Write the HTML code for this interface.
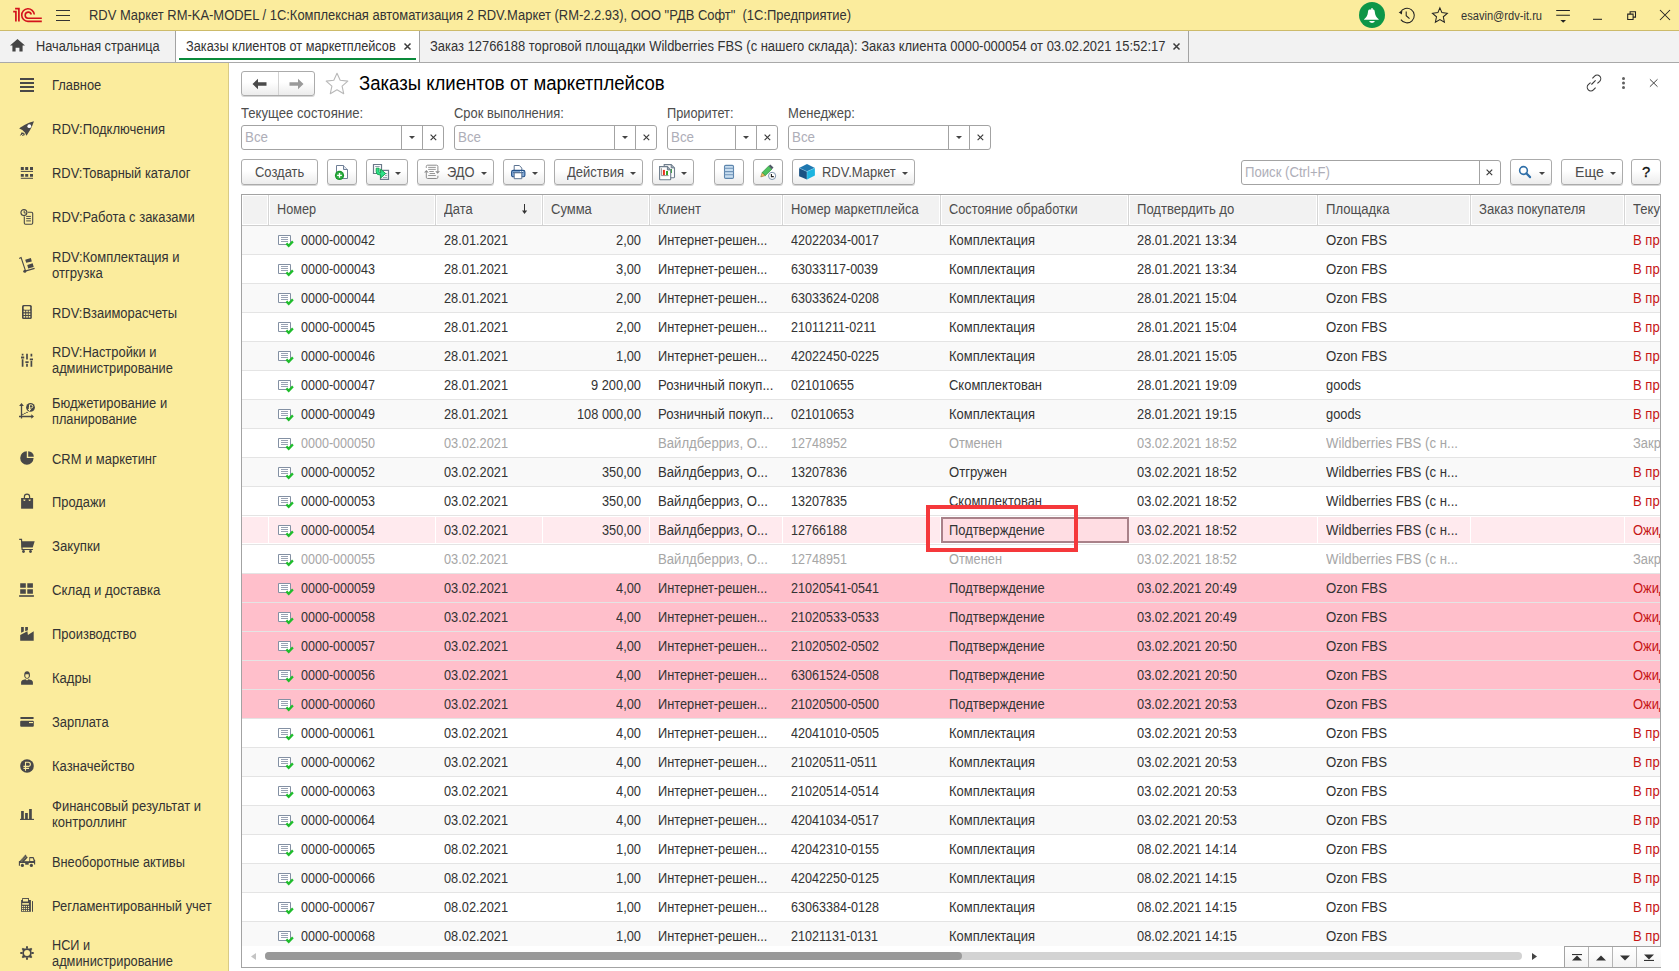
<!DOCTYPE html>
<html><head><meta charset="utf-8"><style>
*{box-sizing:border-box;margin:0;padding:0}
html,body{width:1679px;height:971px;overflow:hidden;background:#fff;font-family:"Liberation Sans",sans-serif;font-size:14px;color:#333;line-height:15px}
div,span,svg{position:absolute}
.tx{white-space:pre;line-height:15px}
.btn{height:26px;border:1px solid #ababab;border-radius:3px;background:linear-gradient(#fff 0%,#fff 45%,#ececec 100%);box-shadow:0 1px 0 rgba(0,0,0,0.16)}
.dd{width:0;height:0;border-left:3px solid transparent;border-right:3px solid transparent;border-top:3px solid #444}
.inp{height:25px;border:1px solid #a3a3a3;border-radius:3px;background:#fff}
.sep{width:1px;background:#a3a3a3}
.ln{height:1px}
</style></head><body>
<div style="left:0px;top:0px;width:1679px;height:30px;background:#fbec9d;"></div>
<div style="left:0px;top:30px;width:1679px;height:1px;background:#cdbb6a;"></div>
<svg style="left:10px;top:4px" width="36" height="22" viewBox="0 0 36 22"><path d="M3.2 7.7H5.9V17.6M5.1 4.6H8.9V17.6" fill="none" stroke="#d3121c" stroke-width="1.7"/><path d="M24.3 10.5A6.3 6.3 0 1 0 17.9 17.4H31.8" fill="none" stroke="#d3121c" stroke-width="1.6"/><path d="M21.3 10.5A3.1 3.1 0 1 0 17.9 14.3H31.8" fill="none" stroke="#d3121c" stroke-width="1.6"/></svg>
<svg style="left:56px;top:9px" width="14" height="13" viewBox="0 0 14 13"><path d="M0 1.5h14M0 6.5h14M0 11.5h14" stroke="#333" stroke-width="1.2"/></svg>
<span class="tx" style="top:8px;font-size:14px;transform:scaleX(0.9245);left:89px;transform-origin:0 0;color:#333;">RDV Маркет RM-KA-MODEL / 1С:Комплексная автоматизация 2 RDV.Маркет (RM-2.2.93), ООО "РДВ Софт"  (1С:Предприятие)</span>
<svg style="left:1340px;top:0px" width="120" height="31" viewBox="1340 0 120 31"><circle cx="1372" cy="15" r="13" fill="#0d9648"/><path d="M1370.6 9.6h2.8c.9 0 1.3 1 1.5 3 .3 3 1.4 5 3.8 6.6v.6h-14.6v-.6c2.4-1.6 3.5-3.6 3.8-6.6.2-2 .6-3 1.5-3z" fill="#fff"/><rect x="1371.2" y="8" width="1.6" height="2.2" rx=".8" fill="#fff"/><path d="M1369.2 21.1h5.6a2.8 1.8 0 0 1-5.6 0z" fill="#fff"/><path d="M1400.4 12.4A7.3 7.3 0 1 1 1400.9 19.6" fill="none" stroke="#222" stroke-width="1.05"/><path d="M1398.6 12.3l3.7-1.3-.5 3.6z" fill="#222"/><path d="M1406.2 11.6v4.1l3.3 3" fill="none" stroke="#222" stroke-width="1.05"/><path d="M1439.9 7.9l2 4.7 5.4.7-4 3.5 1.1 5.4-4.5-2.7-4.5 2.7 1.1-5.4-4-3.5 5.4-.7z" fill="none" stroke="#222" stroke-width="1.05" stroke-linejoin="miter"/></svg>
<span class="tx" style="top:9px;font-size:12px;transform:scaleX(0.9253);left:1461px;transform-origin:0 0;color:#333;">esavin@rdv-it.ru</span>
<svg style="left:1540px;top:0px" width="139" height="31" viewBox="1540 0 139 31"><path d="M1556.2 10.4h13.7M1556.2 15.3h13.7" stroke="#222" stroke-width="1.05"/><path d="M1560.4 20h5.6l-2.8 2.7z" fill="#222"/><path d="M1593 19.3h9" stroke="#222" stroke-width="1.05"/><path d="M1627.7 14.1h5.4v5.4h-5.4zM1630.1 14.1v-2.4h5.4v5.4h-2.4" fill="none" stroke="#222" stroke-width="1.05"/><path d="M1660 10l10 10M1670 10l-10 10" stroke="#222" stroke-width="1.05"/></svg>
<div style="left:0px;top:31px;width:1679px;height:31px;background:#f2f2f2;"></div>
<div style="left:0px;top:62px;width:1679px;height:1px;background:#a9a9a9;"></div>
<div style="left:175px;top:31px;width:1px;height:31px;background:#a3a3a3;"></div>
<div style="left:176px;top:31px;width:243px;height:31px;background:#fff;"></div>
<div style="left:419px;top:31px;width:1px;height:31px;background:#a3a3a3;"></div>
<div style="left:1188px;top:31px;width:1px;height:31px;background:#a3a3a3;"></div>
<div style="left:179px;top:58px;width:237px;height:2px;background:#0a8a3a;"></div>
<svg style="left:10px;top:39px" width="15" height="13" viewBox="0 0 15 13"><path d="M7.5 0L15 6.4h-2.4V12.5H9.4V8.8H5.6v3.7H2.4V6.4H0z" fill="#444"/></svg>
<span class="tx" style="top:39px;font-size:14px;transform:scaleX(0.9133);left:36px;transform-origin:0 0;">Начальная страница</span>
<span class="tx" style="top:39px;font-size:14px;transform:scaleX(0.9096);left:186px;transform-origin:0 0;">Заказы клиентов от маркетплейсов</span>
<svg style="left:403px;top:42px" width="9" height="9" viewBox="0 0 9 9"><path d="M1.5 1.5l6 6M7.5 1.5l-6 6" stroke="#3c3c3c" stroke-width="1.5"/></svg>
<span class="tx" style="top:39px;font-size:14px;transform:scaleX(0.9249);left:430px;transform-origin:0 0;">Заказ 12766188 торговой площадки Wildberries FBS (с нашего склада): Заказ клиента 0000-000054 от 03.02.2021 15:52:17</span>
<svg style="left:1172px;top:42px" width="9" height="9" viewBox="0 0 9 9"><path d="M1.5 1.5l6 6M7.5 1.5l-6 6" stroke="#3c3c3c" stroke-width="1.5"/></svg>
<div style="left:0px;top:63px;width:228px;height:908px;background:#fbec9d;"></div>
<div style="left:228px;top:63px;width:1px;height:908px;background:#d9cb85;"></div>
<span class="tx" style="top:78px;font-size:14px;transform:scaleX(0.9212);left:52px;transform-origin:0 0;color:#333;">Главное</span>
<svg style="left:14px;top:70px" width="26" height="26" viewBox="0 0 26 26"><path d="M6 9h14M6 13h14M6 17h14M6 21h14" stroke="#484848" stroke-width="2"/></svg>
<span class="tx" style="top:122px;font-size:14px;transform:scaleX(0.9308);left:52px;transform-origin:0 0;color:#333;">RDV:Подключения</span>
<svg style="left:14px;top:115px" width="26" height="26" viewBox="0 0 26 26"><path d="M19.9 6.2C16 7 9 10.5 5.2 13.4l3.1 1.6 2.6 2.6 1.5 3.1C15.4 16.8 19 10 19.9 6.2z" fill="#484848"/><circle cx="15.3" cy="11.2" r="1.9" fill="#fff"/><path d="M6.4 20.6l1.2-3.3 1.9 1.1zM8.8 20.6l1.9-1.4-0.4 1.3z" fill="#484848"/><path d="M6.5 20.4l2.2-2.6 1.8 1.3-2.3 1.5" fill="none" stroke="#484848" stroke-width="1"/></svg>
<span class="tx" style="top:166px;font-size:14px;transform:scaleX(0.9243);left:52px;transform-origin:0 0;color:#333;">RDV:Товарный каталог</span>
<svg style="left:14px;top:160px" width="26" height="26" viewBox="0 0 26 26"><path d="M6.8 7h3v3h-3zM11.2 7h3v3h-3zM16 7h3v3h-3zM6.8 14h3v2.8h-3zM11.2 14h3v2.8h-3zM16 14h3v2.8h-3z" fill="#484848"/><path d="M6.8 11.4h12.2M6.8 18.3h12.2" stroke="#484848" stroke-width="1"/></svg>
<span class="tx" style="top:210px;font-size:14px;transform:scaleX(0.9283);left:52px;transform-origin:0 0;color:#333;">RDV:Работа с заказами</span>
<svg style="left:14px;top:204px" width="26" height="26" viewBox="0 0 26 26"><rect x="10.3" y="8.3" width="8.4" height="12" rx="1.2" fill="none" stroke="#484848" stroke-width="1.1"/><circle cx="9.9" cy="8.6" r="3.9" fill="#fbec9d"/><circle cx="9.9" cy="8.6" r="3" fill="none" stroke="#484848" stroke-width="1.1"/><path d="M10.2 6.8v2.2h1.6" fill="none" stroke="#484848" stroke-width="1"/><path d="M12.2 12.4h4.7M12.2 14.6h4.7M12.2 16.9h4.7" stroke="#484848" stroke-width="1"/></svg>
<span class="tx" style="top:250px;font-size:14px;transform:scaleX(0.9275);left:52px;transform-origin:0 0;color:#333;">RDV:Комплектация и</span>
<span class="tx" style="top:266px;font-size:14px;transform:scaleX(0.9371);left:52px;transform-origin:0 0;color:#333;">отгрузка</span>
<svg style="left:14px;top:252px" width="26" height="26" viewBox="0 0 26 26"><path d="M5.2 6.6l1.9-1 4.5 13.6" fill="none" stroke="#484848" stroke-width="1.1"/><circle cx="10.8" cy="19.2" r="1.5" fill="#484848"/><path d="M12 18.8l8.6-2.5" stroke="#484848" stroke-width="1.2"/><path d="M11.2 7.8l5.7-1.9 0.9 3.5-5.6 1.4zM13.3 12.9l5.4-1.7 1 3.8-5.5 1.4z" fill="#484848"/></svg>
<span class="tx" style="top:306px;font-size:14px;transform:scaleX(0.9241);left:52px;transform-origin:0 0;color:#333;">RDV:Взаиморасчеты</span>
<svg style="left:14px;top:299px" width="26" height="26" viewBox="0 0 26 26"><rect x="8" y="6" width="9.8" height="13.9" rx="1.5" fill="#484848"/><rect x="9.7" y="7.3" width="6.5" height="3.4" rx="0.8" fill="#fbec9d"/><rect x="9.6" y="11.6" width="1.6" height="1.6" fill="#fbec9d"/><rect x="9.6" y="14.4" width="1.6" height="1.6" fill="#fbec9d"/><rect x="9.6" y="17.0" width="1.6" height="1.6" fill="#fbec9d"/><rect x="12.2" y="11.6" width="1.6" height="1.6" fill="#fbec9d"/><rect x="12.2" y="14.4" width="1.6" height="1.6" fill="#fbec9d"/><rect x="12.2" y="17.0" width="1.6" height="1.6" fill="#fbec9d"/><rect x="14.7" y="11.6" width="1.6" height="1.6" fill="#fbec9d"/><rect x="14.7" y="14.4" width="1.6" height="1.6" fill="#fbec9d"/><rect x="14.7" y="17.0" width="1.6" height="1.6" fill="#fbec9d"/></svg>
<span class="tx" style="top:345px;font-size:14px;transform:scaleX(0.9226);left:52px;transform-origin:0 0;color:#333;">RDV:Настройки и</span>
<span class="tx" style="top:361px;font-size:14px;transform:scaleX(0.9159);left:52px;transform-origin:0 0;color:#333;">администрирование</span>
<svg style="left:14px;top:347px" width="26" height="26" viewBox="0 0 26 26"><path d="M8.6 6.8v1.6M8.6 12.2v7.6M13 6.8v5.6M13 16.8v3M17.4 6.8v2.8M17.4 13.8v6" stroke="#484848" stroke-width="1.7"/><path d="M7 9.6h3.2v1.8H7zM11.4 14.2h3.2v1.8h-3.2zM15.8 11.4h3.2v1.8h-3.2z" fill="#484848"/></svg>
<span class="tx" style="top:396px;font-size:14px;transform:scaleX(0.9274);left:52px;transform-origin:0 0;color:#333;">Бюджетирование и</span>
<span class="tx" style="top:412px;font-size:14px;transform:scaleX(0.9118);left:52px;transform-origin:0 0;color:#333;">планирование</span>
<svg style="left:14px;top:398px" width="26" height="26" viewBox="0 0 26 26"><path d="M7.5 6.8V20.6M5 18.5h13" stroke="#484848" stroke-width="1.3"/><path d="M7.5 5l2.4 2.9H5.1zM20 18.5l-2.7 2.3v-4.6z" fill="#484848"/><path d="M8.2 16.4h1.2l1-1h1l1-1h1.4" fill="none" stroke="#484848" stroke-width="1"/><circle cx="16.5" cy="9.4" r="4.4" fill="#484848"/><path d="M15.5 13V6.8h1.7a1.6 1.6 0 0 1 0 3.2h-2.6M14 11.6h3" fill="none" stroke="#fbec9d" stroke-width="1"/></svg>
<span class="tx" style="top:452px;font-size:14px;transform:scaleX(0.9238);left:52px;transform-origin:0 0;color:#333;">CRM и маркетинг</span>
<svg style="left:14px;top:445px" width="26" height="26" viewBox="0 0 26 26"><path d="M12.8 6.3A6.7 6.7 0 1 0 19.6 13.1H12.8z" fill="#484848"/><path d="M14.2 6.2A5.6 5.6 0 0 1 19.8 11.8H14.2z" fill="#484848"/></svg>
<span class="tx" style="top:495px;font-size:14px;transform:scaleX(0.9188);left:52px;transform-origin:0 0;color:#333;">Продажи</span>
<svg style="left:14px;top:488px" width="26" height="26" viewBox="0 0 26 26"><path d="M7.1 10h12v10.7h-12z" fill="#484848"/><circle cx="10.4" cy="12" r="1" fill="#fbec9d"/><circle cx="15.6" cy="12" r="1" fill="#fbec9d"/><path d="M10.4 11.5V8.8a2.6 2.6 0 0 1 5.2 0v2.7" fill="none" stroke="#484848" stroke-width="1.2"/></svg>
<span class="tx" style="top:539px;font-size:14px;transform:scaleX(0.9431);left:52px;transform-origin:0 0;color:#333;">Закупки</span>
<svg style="left:14px;top:533px" width="26" height="26" viewBox="0 0 26 26"><path d="M5.2 6.4h2.3l0.6 10.1h10.8" fill="none" stroke="#484848" stroke-width="1.2"/><path d="M7.6 8.3h13.1l-2 6.3H7.4z" fill="#484848"/><circle cx="9.5" cy="18.5" r="1.4" fill="#484848"/><circle cx="16.5" cy="18.5" r="1.4" fill="#484848"/></svg>
<span class="tx" style="top:583px;font-size:14px;transform:scaleX(0.9436);left:52px;transform-origin:0 0;color:#333;">Склад и доставка</span>
<svg style="left:14px;top:577px" width="26" height="26" viewBox="0 0 26 26"><path d="M6.2 6.2h5.6v4.5H6.2zM13.3 6.2h5.6v4.5h-5.6zM6.2 12.2h5.6v4.5H6.2zM13.3 12.2h5.6v4.5h-5.6z" fill="#484848"/><path d="M5.1 18.2h14.8v1.6H5.1z" fill="#484848"/></svg>
<span class="tx" style="top:627px;font-size:14px;transform:scaleX(0.9249);left:52px;transform-origin:0 0;color:#333;">Производство</span>
<svg style="left:14px;top:621px" width="26" height="26" viewBox="0 0 26 26"><path d="M7.1 6h2.7v4.5l-2.7 1.2zM11.2 6h2.7v3.2l-2.7 1.1z" fill="#484848"/><path d="M6.2 14l7.2-3.7 0.5 3.7 5.8-3.7v9.5H6.2z" fill="#484848"/></svg>
<span class="tx" style="top:671px;font-size:14px;transform:scaleX(0.9295);left:52px;transform-origin:0 0;color:#333;">Кадры</span>
<svg style="left:14px;top:665px" width="26" height="26" viewBox="0 0 26 26"><path d="M10.2 10.5c0-3 1-4.3 2.9-4.3s2.9 1.3 2.9 4.3c0 2-1.2 3.2-2.9 3.2s-2.9-1.2-2.9-3.2z" fill="#484848"/><path d="M11.3 9.6c0.9-0.3 2-0.6 3.5-0.1v1.6c0 1.3-0.7 2-1.7 2s-1.8-0.7-1.8-2z" fill="#fbec9d"/><path d="M7.1 17.2c0-1.6 1.5-2.6 4.4-3l1.5 1.2 1.5-1.2c2.9 0.4 4.4 1.4 4.4 3v2.6H7.1z" fill="#484848"/></svg>
<span class="tx" style="top:715px;font-size:14px;transform:scaleX(0.9229);left:52px;transform-origin:0 0;color:#333;">Зарплата</span>
<svg style="left:14px;top:709px" width="26" height="26" viewBox="0 0 26 26"><rect x="6.2" y="8" width="13.6" height="1.9" rx="0.9" fill="#484848"/><rect x="6.2" y="11.8" width="13.6" height="5.9" rx="1" fill="#484848"/><rect x="15" y="13" width="4" height="1.1" fill="#fbec9d"/></svg>
<span class="tx" style="top:759px;font-size:14px;transform:scaleX(0.9283);left:52px;transform-origin:0 0;color:#333;">Казначейство</span>
<svg style="left:14px;top:753px" width="26" height="26" viewBox="0 0 26 26"><circle cx="13" cy="13" r="6.8" fill="#484848"/><path d="M11.5 17.8V9.2h2.8a2.1 2.1 0 0 1 0 4.2h-4.9M9.4 15.4h5.6" fill="none" stroke="#fbec9d" stroke-width="1.1"/></svg>
<span class="tx" style="top:799px;font-size:14px;transform:scaleX(0.9293);left:52px;transform-origin:0 0;color:#333;">Финансовый результат и</span>
<span class="tx" style="top:815px;font-size:14px;transform:scaleX(0.9303);left:52px;transform-origin:0 0;color:#333;">контроллинг</span>
<svg style="left:14px;top:801px" width="26" height="26" viewBox="0 0 26 26"><path d="M7.1 10h2.7v8.5H7.1zM11.1 12h2.7v6.5h-2.7zM15.1 8h2.7v10.5h-2.7z" fill="#484848"/><path d="M6 18.4h14" stroke="#484848" stroke-width="1.1"/></svg>
<span class="tx" style="top:855px;font-size:14px;transform:scaleX(0.9138);left:52px;transform-origin:0 0;color:#333;">Внеоборотные активы</span>
<svg style="left:14px;top:848px" width="26" height="26" viewBox="0 0 26 26"><path d="M5.1 13.2h15.8v1.8H5.1z" fill="#484848"/><path d="M5.4 13.2v4.5M20.6 12v4.6" stroke="#484848" stroke-width="1.1"/><path d="M15.3 9h4.2l1.4 3.2v2.3h-5.6z" fill="#484848"/><path d="M16.1 10.2h2.8l0.8 2.9h-3.6z" fill="#fbec9d"/><path d="M5.1 13.7l6.4-7.3 2.2 3-4.1 4.5z" fill="#484848"/><path d="M6.6 13l4.6-5.2M7.8 13.5l4.8-5.4" stroke="#fbec9d" stroke-width="0.6" stroke-dasharray="0.8 0.8"/><path d="M11.2 15h3.5v1.7h-3.5z" fill="#484848"/><circle cx="8.4" cy="17.4" r="1.6" fill="#484848"/><circle cx="17.4" cy="17.4" r="1.6" fill="#484848"/></svg>
<span class="tx" style="top:899px;font-size:14px;transform:scaleX(0.9248);left:52px;transform-origin:0 0;color:#333;">Регламентированный учет</span>
<svg style="left:14px;top:892px" width="26" height="26" viewBox="0 0 26 26"><path d="M7.1 8h9.8v11.8H7.1z" fill="#484848"/><path d="M8.2 6h6.7v4.2H8.2z" fill="#484848"/><path d="M9 6.9h5v2.6H9z" fill="#fbec9d"/><path d="M8.2 11.1h6.7v1.6H8.2z" fill="#fbec9d"/><rect x="8.0" y="13.9" width="1.2" height="1.2" fill="#fbec9d"/><rect x="8.0" y="15.9" width="1.2" height="1.2" fill="#fbec9d"/><rect x="8.0" y="17.9" width="1.2" height="1.2" fill="#fbec9d"/><rect x="9.8" y="13.9" width="1.2" height="1.2" fill="#fbec9d"/><rect x="9.8" y="15.9" width="1.2" height="1.2" fill="#fbec9d"/><rect x="9.8" y="17.9" width="1.2" height="1.2" fill="#fbec9d"/><rect x="11.8" y="13.9" width="1.2" height="1.2" fill="#fbec9d"/><rect x="11.8" y="15.9" width="1.2" height="1.2" fill="#fbec9d"/><rect x="11.8" y="17.9" width="1.2" height="1.2" fill="#fbec9d"/><rect x="13.9" y="13.9" width="1.2" height="1.2" fill="#fbec9d"/><rect x="13.9" y="15.9" width="1.2" height="1.2" fill="#fbec9d"/><rect x="13.9" y="17.9" width="1.2" height="1.2" fill="#fbec9d"/><path d="M18.5 9.1v10.7" stroke="#484848" stroke-width="1"/></svg>
<span class="tx" style="top:938px;font-size:14px;transform:scaleX(0.9049);left:52px;transform-origin:0 0;color:#333;">НСИ и</span>
<span class="tx" style="top:954px;font-size:14px;transform:scaleX(0.9159);left:52px;transform-origin:0 0;color:#333;">администрирование</span>
<svg style="left:14px;top:940px" width="26" height="26" viewBox="0 0 26 26"><path d="M13 6.3v2.4M13 17.3v2.4M6.3 13h2.4M17.3 13h2.4M8.3 8.3l1.6 1.6M16.1 16.1l1.6 1.6M17.7 8.3l-1.6 1.6M9.9 16.1l-1.6 1.6" stroke="#484848" stroke-width="1.9"/><rect x="8.6" y="8.6" width="8.8" height="8.8" rx="1.5" fill="#484848"/><circle cx="13" cy="13" r="3" fill="#fbec9d"/></svg>
<div class="btn" style="left:241px;top:71px;width:74px;height:25px"></div>
<div style="left:278px;top:72px;width:1px;height:23px;background:#d2d2d2;"></div>
<svg style="left:252px;top:78px" width="15" height="12" viewBox="0 0 15 12"><path d="M0.5 6L6 0.8V4.2H14.5V7.8H6V11.2z" fill="#4a4a4a"/></svg>
<svg style="left:289px;top:78px" width="15" height="12" viewBox="0 0 15 12"><path d="M14.5 6L9 0.8V4.2H0.5V7.8H9V11.2z" fill="#9a9a9a"/></svg>
<svg style="left:325px;top:72px" width="24" height="23" viewBox="0 0 24 23"><path d="M12 1.2l3.2 7.1 7.6.8-5.7 5.1 1.6 7.5L12 17.8l-6.7 3.9 1.6-7.5-5.7-5.1 7.6-.8z" fill="none" stroke="#b8b8b8" stroke-width="1.1" stroke-linejoin="round"/></svg>
<span class="tx" style="top:74px;font-size:20px;transform:scaleX(0.9278);left:359px;transform-origin:0 0;color:#000;top:73px;line-height:20px;">Заказы клиентов от маркетплейсов</span>
<svg style="left:1582px;top:71px" width="24" height="24" viewBox="0 0 24 24"><path d="M10.4 7.4l2.2-2.2a3.6 3.6 0 0 1 5.1 5.1l-2.3 2.1M13.6 16.6l-2.2 2.2a3.6 3.6 0 0 1-5.1-5.1l2.3-2.1M9.4 13.5l4.2-4.2" fill="none" stroke="#3a3a3a" stroke-width="1.1"/></svg>
<svg style="left:1621px;top:77px" width="5" height="12" viewBox="0 0 5 12"><circle cx="2.5" cy="1.6" r="1.5" fill="#606060"/><circle cx="2.5" cy="6" r="1.5" fill="#606060"/><circle cx="2.5" cy="10.4" r="1.5" fill="#606060"/></svg>
<svg style="left:1649px;top:78px" width="10" height="10" viewBox="0 0 10 10"><path d="M0.9 1.3l7.6 7.4M8.5 1.3l-7.6 7.4" stroke="#444" stroke-width="1"/></svg>
<span class="tx" style="top:106px;font-size:14px;transform:scaleX(0.9372);left:241px;transform-origin:0 0;color:#4d4d4d;">Текущее состояние:</span>
<span class="tx" style="top:106px;font-size:14px;transform:scaleX(0.9223);left:454px;transform-origin:0 0;color:#4d4d4d;">Срок выполнения:</span>
<span class="tx" style="top:106px;font-size:14px;transform:scaleX(0.9108);left:667px;transform-origin:0 0;color:#4d4d4d;">Приоритет:</span>
<span class="tx" style="top:106px;font-size:14px;transform:scaleX(0.9310);left:788px;transform-origin:0 0;color:#4d4d4d;">Менеджер:</span>
<div class="inp" style="left:241px;top:125px;width:203px"></div>
<div style="left:401px;top:126px;width:1px;height:23px;background:#a3a3a3;"></div>
<div style="left:422px;top:126px;width:1px;height:23px;background:#a3a3a3;"></div>
<div class="dd" style="left:409px;top:136px"></div>
<svg style="left:430px;top:134px" width="7" height="7" viewBox="0 0 7 7"><path d="M0.6 0.6l5.6 5.6M6.2 0.6l-5.6 5.6" stroke="#3a3a3a" stroke-width="1.15"/></svg>
<span class="tx" style="top:130px;font-size:14px;transform:scaleX(0.9534);left:245px;transform-origin:0 0;color:#aeaeb8;">Все</span>
<div class="inp" style="left:454px;top:125px;width:203px"></div>
<div style="left:614px;top:126px;width:1px;height:23px;background:#a3a3a3;"></div>
<div style="left:635px;top:126px;width:1px;height:23px;background:#a3a3a3;"></div>
<div class="dd" style="left:622px;top:136px"></div>
<svg style="left:643px;top:134px" width="7" height="7" viewBox="0 0 7 7"><path d="M0.6 0.6l5.6 5.6M6.2 0.6l-5.6 5.6" stroke="#3a3a3a" stroke-width="1.15"/></svg>
<span class="tx" style="top:130px;font-size:14px;transform:scaleX(0.9534);left:458px;transform-origin:0 0;color:#aeaeb8;">Все</span>
<div class="inp" style="left:667px;top:125px;width:111px"></div>
<div style="left:735px;top:126px;width:1px;height:23px;background:#a3a3a3;"></div>
<div style="left:756px;top:126px;width:1px;height:23px;background:#a3a3a3;"></div>
<div class="dd" style="left:743px;top:136px"></div>
<svg style="left:764px;top:134px" width="7" height="7" viewBox="0 0 7 7"><path d="M0.6 0.6l5.6 5.6M6.2 0.6l-5.6 5.6" stroke="#3a3a3a" stroke-width="1.15"/></svg>
<span class="tx" style="top:130px;font-size:14px;transform:scaleX(0.9534);left:671px;transform-origin:0 0;color:#aeaeb8;">Все</span>
<div class="inp" style="left:788px;top:125px;width:203px"></div>
<div style="left:948px;top:126px;width:1px;height:23px;background:#a3a3a3;"></div>
<div style="left:969px;top:126px;width:1px;height:23px;background:#a3a3a3;"></div>
<div class="dd" style="left:956px;top:136px"></div>
<svg style="left:977px;top:134px" width="7" height="7" viewBox="0 0 7 7"><path d="M0.6 0.6l5.6 5.6M6.2 0.6l-5.6 5.6" stroke="#3a3a3a" stroke-width="1.15"/></svg>
<span class="tx" style="top:130px;font-size:14px;transform:scaleX(0.9534);left:792px;transform-origin:0 0;color:#aeaeb8;">Все</span>
<div class="btn" style="left:241px;top:159px;width:77px;height:26px"></div>
<span class="tx" style="top:165px;font-size:14px;transform:scaleX(0.9263);left:255px;transform-origin:0 0;color:#4d4d4d;">Создать</span>
<div class="btn" style="left:327px;top:159px;width:30px;height:26px"></div>
<svg style="left:330px;top:160px" width="24" height="24" viewBox="0 0 24 24"><path d="M6.5 5.5h7l4 4v9h-11z" fill="#fff" stroke="#6f7f96" stroke-width="1"/><path d="M13.5 5.5v4h4" fill="#dfe5ee" stroke="#6f7f96" stroke-width="1"/><circle cx="9.5" cy="15.4" r="4.6" fill="#16962a"/><circle cx="9.5" cy="15.4" r="3.4" fill="#2fae42"/><path d="M9.5 13v4.8M7.1 15.4h4.8" stroke="#fff" stroke-width="1.3"/></svg>
<div class="btn" style="left:366px;top:159px;width:42px;height:26px"></div>
<svg style="left:368px;top:160px" width="24" height="24" viewBox="0 0 24 24"><path d="M5.5 4.5h8v9h-8z" fill="#fff" stroke="#6b7889" stroke-width="1.2"/><path d="M7.2 6.5h4.5" stroke="#8894a4" stroke-width="0.9"/><path d="M12.5 10.4h8v9h-8z" fill="#fff" stroke="#6b7889" stroke-width="1.2"/><path d="M17 13.5h2.2M17 15.4h2.2M15 17.4h4.2" stroke="#8894a4" stroke-width="0.9"/><path d="M8.2 8.2h2.9v3.6c0 .6.4 1 1 1h.6V9.1l5 4.4-5 4.5v-3.2h-1.6a3 3 0 0 1-2.9-3z" fill="#2ee08a" stroke="#12a04a" stroke-width="0.9" stroke-linejoin="round"/></svg>
<div class="dd" style="left:395px;top:172px"></div>
<div class="btn" style="left:417px;top:159px;width:77px;height:26px"></div>
<svg style="left:420px;top:160px" width="24" height="24" viewBox="0 0 24 24"><path d="M6.3 7.9V6.5a1.3 1.3 0 0 1 1.3-1.3h9a1.3 1.3 0 0 1 1.3 1.3v5M17.9 15.8v1.4a1.3 1.3 0 0 1-1.3 1.3h-9a1.3 1.3 0 0 1-1.3-1.3V12.4" fill="none" stroke="#8c8c8c" stroke-width="1"/><path d="M6.4 10.1l2.4 2.5H4z M17.6 13.8l2.4-2.5h-4.8z" fill="#8c8c8c"/><path d="M8.2 7.4h7.6M8.2 9.4h7.6M9.3 11.5h4.5M9.6 13.5h5.4M8.2 15.5h7.6" stroke="#8c8c8c" stroke-width="0.9"/></svg>
<span class="tx" style="top:165px;font-size:14px;transform:scaleX(0.9200);left:447px;transform-origin:0 0;color:#4d4d4d;">ЭДО</span>
<div class="dd" style="left:481px;top:172px"></div>
<div class="btn" style="left:503px;top:159px;width:42px;height:26px"></div>
<svg style="left:506px;top:160px" width="24" height="24" viewBox="0 0 24 24"><path d="M8.2 10.4V5.5h5.2l2.4 2.6v2.3" fill="#fff" stroke="#5c7391" stroke-width="1"/><rect x="5.6" y="10.4" width="13.3" height="6.4" rx="1.6" fill="#86acd8" stroke="#24528a" stroke-width="1.1"/><path d="M7.2 12.4h10.2" stroke="#24528a" stroke-width="0.9"/><path d="M8.2 12.8h7.6v5.9H8.2z" fill="#fff" stroke="#5c7391" stroke-width="1"/><circle cx="14.5" cy="11.5" r="0.55" fill="#fff"/><circle cx="16.6" cy="11.5" r="0.55" fill="#fff"/></svg>
<div class="dd" style="left:532px;top:172px"></div>
<div class="btn" style="left:554px;top:159px;width:89px;height:26px"></div>
<span class="tx" style="top:165px;font-size:14px;transform:scaleX(0.9293);left:567px;transform-origin:0 0;color:#4d4d4d;">Действия</span>
<div class="dd" style="left:630px;top:172px"></div>
<div class="btn" style="left:652px;top:159px;width:42px;height:26px"></div>
<svg style="left:655px;top:160px" width="24" height="24" viewBox="0 0 24 24"><path d="M9.2 4.6h7l3.3 3.3v9.2a.6.6 0 0 1-.6.6h-9.7z" fill="#fff" stroke="#6e7d8c" stroke-width="1.1"/><path d="M16.2 4.6v3.3h3.3" fill="#9aa6b3" stroke="#6e7d8c" stroke-width="1"/><path d="M15 9h2v4h-2z" fill="#3aa63a"/><path d="M4.6 6.6h7.8l3.3 3.3v9.3a.6.6 0 0 1-.6.6H5.2a.6.6 0 0 1-.6-.6z" fill="#fff" stroke="#6e7d8c" stroke-width="1.1"/><path d="M12.4 6.6v3.3h3.3" fill="#9aa6b3" stroke="#6e7d8c" stroke-width="1"/><path d="M6.4 8.2v7.4h7.2" fill="none" stroke="#8a8a8a" stroke-width="0.9"/><path d="M7.9 9.9h2v5.2h-2z" fill="#e8321e"/><path d="M11 11h2v4.1h-2z" fill="#37a52b"/></svg>
<div class="dd" style="left:681px;top:172px"></div>
<div class="btn" style="left:714px;top:159px;width:30px;height:26px"></div>
<svg style="left:717px;top:160px" width="24" height="24" viewBox="0 0 24 24"><rect x="7.5" y="5.4" width="9" height="13" rx="1.2" fill="#c8def0" stroke="#5e86ad" stroke-width="1.1"/><path d="M7.5 8.3h9M7.5 11.6h9M7.5 14.8h9" stroke="#6f93b8" stroke-width="1.1"/></svg>
<div class="btn" style="left:753px;top:159px;width:30px;height:26px"></div>
<svg style="left:756px;top:160px" width="24" height="24" viewBox="0 0 24 24"><path d="M4.8 16.9l1.4-4.4 3.2 3z" fill="#f4c060" stroke="#8a6a30" stroke-width="0.6"/><path d="M6.2 12.5l6.5-6.5 3.2 3.2-6.5 6.3z" fill="#4dc25e" stroke="#1f8a30" stroke-width="0.6"/><path d="M12.7 6l1.6-1.6 3.2 3.2-1.6 1.6z" fill="#505a66"/><circle cx="16.1" cy="15.9" r="3.6" fill="#fff" stroke="#7f95ad" stroke-width="1"/><path d="M15.4 14v2.6h2.4" fill="none" stroke="#222" stroke-width="1.1"/></svg>
<div class="btn" style="left:792px;top:159px;width:123px;height:26px"></div>
<svg style="left:795px;top:160px" width="24" height="24" viewBox="0 0 24 24"><path d="M12 4.1L19.9 7.9 12 11.6 4.1 7.9z" fill="#1f78b0"/><path d="M4.1 7.9L12 11.6v7.9l-7.9-3.3z" fill="#1b5283"/><path d="M19.9 7.9L12 11.6v7.9l7.9-4.1z" fill="#1db5e0"/><path d="M4.1 7.9L12 11.6 19.9 7.9M12 11.6v7.9" fill="none" stroke="#8fd3f0" stroke-width="0.6" opacity="0.8"/></svg>
<span class="tx" style="top:165px;font-size:14px;transform:scaleX(0.9259);left:822px;transform-origin:0 0;color:#4d4d4d;">RDV.Маркет</span>
<div class="dd" style="left:902px;top:172px"></div>
<div class="inp" style="left:1241px;top:160px;width:260px;height:25px"></div>
<div style="left:1479px;top:161px;width:1px;height:23px;background:#a3a3a3;"></div>
<svg style="left:1486px;top:169px" width="7" height="7" viewBox="0 0 7 7"><path d="M0.6 0.6l5.6 5.6M6.2 0.6l-5.6 5.6" stroke="#3a3a3a" stroke-width="1.15"/></svg>
<span class="tx" style="top:165px;font-size:14px;transform:scaleX(0.9391);left:1245px;transform-origin:0 0;color:#aeaeb8;">Поиск (Ctrl+F)</span>
<div class="btn" style="left:1510px;top:159px;width:42px;height:26px"></div>
<svg style="left:1513px;top:160px" width="24" height="24" viewBox="0 0 24 24"><circle cx="10.5" cy="10.5" r="3.85" fill="none" stroke="#2f6fa8" stroke-width="1.6"/><path d="M13.3 13.3l3.8 3.8" stroke="#2f6fa8" stroke-width="2.2" stroke-linecap="round"/></svg>
<div class="dd" style="left:1539px;top:172px"></div>
<div class="btn" style="left:1561px;top:159px;width:62px;height:26px"></div>
<span class="tx" style="top:165px;font-size:14px;transform:scaleX(1.0125);left:1575px;transform-origin:0 0;color:#4d4d4d;">Еще</span>
<div class="dd" style="left:1610px;top:172px"></div>
<div class="btn" style="left:1631px;top:159px;width:30px;height:26px"></div>
<span class="tx" style="top:164px;font-size:15px;transform:scaleX(0.9829);left:1642px;transform-origin:0 0;color:#111;-webkit-text-stroke:0.35px #111;">?</span>
<div style="left:241px;top:194px;width:1420px;height:774px;border:1px solid #a3a3a3;background:#fff"></div>
<div style="left:242px;top:195px;width:1418px;height:30px;background:#f2f2f2;"></div>
<div style="left:242px;top:195px;width:1418px;height:1px;background:#fff;"></div>
<div style="left:242px;top:195px;width:1px;height:30px;background:#fff;"></div>
<div style="left:242px;top:224px;width:1418px;height:1px;background:#fff;"></div>
<div style="left:267px;top:195px;width:1px;height:30px;background:#fff;"></div>
<div style="left:268px;top:195px;width:1px;height:30px;background:#d6d6d6;"></div>
<div style="left:269px;top:195px;width:1px;height:30px;background:#fff;"></div>
<div style="left:434px;top:195px;width:1px;height:30px;background:#fff;"></div>
<div style="left:435px;top:195px;width:1px;height:30px;background:#d6d6d6;"></div>
<div style="left:436px;top:195px;width:1px;height:30px;background:#fff;"></div>
<div style="left:541px;top:195px;width:1px;height:30px;background:#fff;"></div>
<div style="left:542px;top:195px;width:1px;height:30px;background:#d6d6d6;"></div>
<div style="left:543px;top:195px;width:1px;height:30px;background:#fff;"></div>
<div style="left:648px;top:195px;width:1px;height:30px;background:#fff;"></div>
<div style="left:649px;top:195px;width:1px;height:30px;background:#d6d6d6;"></div>
<div style="left:650px;top:195px;width:1px;height:30px;background:#fff;"></div>
<div style="left:781px;top:195px;width:1px;height:30px;background:#fff;"></div>
<div style="left:782px;top:195px;width:1px;height:30px;background:#d6d6d6;"></div>
<div style="left:783px;top:195px;width:1px;height:30px;background:#fff;"></div>
<div style="left:939px;top:195px;width:1px;height:30px;background:#fff;"></div>
<div style="left:940px;top:195px;width:1px;height:30px;background:#d6d6d6;"></div>
<div style="left:941px;top:195px;width:1px;height:30px;background:#fff;"></div>
<div style="left:1127px;top:195px;width:1px;height:30px;background:#fff;"></div>
<div style="left:1128px;top:195px;width:1px;height:30px;background:#d6d6d6;"></div>
<div style="left:1129px;top:195px;width:1px;height:30px;background:#fff;"></div>
<div style="left:1316px;top:195px;width:1px;height:30px;background:#fff;"></div>
<div style="left:1317px;top:195px;width:1px;height:30px;background:#d6d6d6;"></div>
<div style="left:1318px;top:195px;width:1px;height:30px;background:#fff;"></div>
<div style="left:1469px;top:195px;width:1px;height:30px;background:#fff;"></div>
<div style="left:1470px;top:195px;width:1px;height:30px;background:#d6d6d6;"></div>
<div style="left:1471px;top:195px;width:1px;height:30px;background:#fff;"></div>
<div style="left:1623px;top:195px;width:1px;height:30px;background:#fff;"></div>
<div style="left:1624px;top:195px;width:1px;height:30px;background:#d6d6d6;"></div>
<div style="left:1625px;top:195px;width:1px;height:30px;background:#fff;"></div>
<div style="left:1659px;top:195px;width:1px;height:30px;background:#fff;"></div>
<div style="left:242px;top:225px;width:1418px;height:1px;background:#cfcfcf;"></div>
<div style="left:242px;top:195px;width:1418px;height:751px;overflow:hidden">
<span class="tx" style="top:7px;font-size:14px;transform:scaleX(0.9050);left:35px;transform-origin:0 0;color:#4d4d4d;">Номер</span>
<span class="tx" style="top:7px;font-size:14px;transform:scaleX(0.9216);left:202px;transform-origin:0 0;color:#4d4d4d;">Дата</span>
<span class="tx" style="top:7px;font-size:14px;transform:scaleX(0.9287);left:309px;transform-origin:0 0;color:#4d4d4d;">Сумма</span>
<span class="tx" style="top:7px;font-size:14px;transform:scaleX(0.9333);left:416px;transform-origin:0 0;color:#4d4d4d;">Клиент</span>
<span class="tx" style="top:7px;font-size:14px;transform:scaleX(0.9232);left:549px;transform-origin:0 0;color:#4d4d4d;">Номер маркетплейса</span>
<span class="tx" style="top:7px;font-size:14px;transform:scaleX(0.9120);left:707px;transform-origin:0 0;color:#4d4d4d;">Состояние обработки</span>
<span class="tx" style="top:7px;font-size:14px;transform:scaleX(0.9335);left:895px;transform-origin:0 0;color:#4d4d4d;">Подтвердить до</span>
<span class="tx" style="top:7px;font-size:14px;transform:scaleX(0.9347);left:1084px;transform-origin:0 0;color:#4d4d4d;">Площадка</span>
<span class="tx" style="top:7px;font-size:14px;transform:scaleX(0.9364);left:1237px;transform-origin:0 0;color:#4d4d4d;">Заказ покупателя</span>
<span class="tx" style="top:7px;font-size:14px;transform:scaleX(0.9345);left:1391px;transform-origin:0 0;color:#4d4d4d;">Текущее состояние</span>
<svg style="left:278px;top:9px" width="9" height="11" viewBox="0 0 9 11"><path d="M4.5 0v8" stroke="#333" stroke-width="1"/><path d="M2 6.6L4.5 10 7.2 6.6z" fill="#333"/></svg>
<div style="left:0px;top:31px;width:1418px;height:28px;background:#f9f9f9;"></div>
<div style="left:0px;top:59px;width:1418px;height:1px;background:#e4e4e4;"></div>
<svg style="left:36px;top:40px" width="17" height="14" viewBox="0 0 17 14"><path d="M0.5 0.5h12v9h-12z" fill="#fff" stroke="#8390a3"/><path d="M3 2.5h7M3 4.5h7M3 6.5h7" stroke="#98a2b3" stroke-width="1"/><path d="M8.4 8.4l2.3 2.4 4.2-4.4" fill="none" stroke="#1fbd2c" stroke-width="2.3"/></svg>
<span class="tx" style="top:38px;font-size:14px;transform:scaleX(0.8967);left:59px;transform-origin:0 0;color:#333;">0000-000042</span>
<span class="tx" style="top:38px;font-size:14px;transform:scaleX(0.9134);left:202px;transform-origin:0 0;color:#333;">28.01.2021</span>
<span class="tx" style="top:38px;font-size:14px;transform:scaleX(0.9175);left:374.00px;transform-origin:0 0;color:#333;">2,00</span>
<span class="tx" style="top:38px;font-size:14px;transform:scaleX(0.9139);left:416px;transform-origin:0 0;color:#333;">Интернет-решен...</span>
<span class="tx" style="top:38px;font-size:14px;transform:scaleX(0.8971);left:549px;transform-origin:0 0;color:#333;">42022034-0017</span>
<span class="tx" style="top:38px;font-size:14px;transform:scaleX(0.9263);left:707px;transform-origin:0 0;color:#333;">Комплектация</span>
<span class="tx" style="top:38px;font-size:14px;transform:scaleX(0.9175);left:895px;transform-origin:0 0;color:#333;">28.01.2021 13:34</span>
<span class="tx" style="top:38px;font-size:14px;transform:scaleX(0.9446);left:1084px;transform-origin:0 0;color:#333;">Ozon FBS</span>
<span class="tx" style="top:38px;font-size:14px;transform:scaleX(0.9328);left:1391px;transform-origin:0 0;color:#c61616;">В процессе</span>
<div style="left:0px;top:60px;width:1418px;height:28px;background:#ffffff;"></div>
<div style="left:0px;top:88px;width:1418px;height:1px;background:#e4e4e4;"></div>
<svg style="left:36px;top:69px" width="17" height="14" viewBox="0 0 17 14"><path d="M0.5 0.5h12v9h-12z" fill="#fff" stroke="#8390a3"/><path d="M3 2.5h7M3 4.5h7M3 6.5h7" stroke="#98a2b3" stroke-width="1"/><path d="M8.4 8.4l2.3 2.4 4.2-4.4" fill="none" stroke="#1fbd2c" stroke-width="2.3"/></svg>
<span class="tx" style="top:67px;font-size:14px;transform:scaleX(0.8967);left:59px;transform-origin:0 0;color:#333;">0000-000043</span>
<span class="tx" style="top:67px;font-size:14px;transform:scaleX(0.9134);left:202px;transform-origin:0 0;color:#333;">28.01.2021</span>
<span class="tx" style="top:67px;font-size:14px;transform:scaleX(0.9175);left:374.00px;transform-origin:0 0;color:#333;">3,00</span>
<span class="tx" style="top:67px;font-size:14px;transform:scaleX(0.9139);left:416px;transform-origin:0 0;color:#333;">Интернет-решен...</span>
<span class="tx" style="top:67px;font-size:14px;transform:scaleX(0.8971);left:549px;transform-origin:0 0;color:#333;">63033117-0039</span>
<span class="tx" style="top:67px;font-size:14px;transform:scaleX(0.9263);left:707px;transform-origin:0 0;color:#333;">Комплектация</span>
<span class="tx" style="top:67px;font-size:14px;transform:scaleX(0.9175);left:895px;transform-origin:0 0;color:#333;">28.01.2021 13:34</span>
<span class="tx" style="top:67px;font-size:14px;transform:scaleX(0.9446);left:1084px;transform-origin:0 0;color:#333;">Ozon FBS</span>
<span class="tx" style="top:67px;font-size:14px;transform:scaleX(0.9328);left:1391px;transform-origin:0 0;color:#c61616;">В процессе</span>
<div style="left:0px;top:89px;width:1418px;height:28px;background:#f9f9f9;"></div>
<div style="left:0px;top:117px;width:1418px;height:1px;background:#e4e4e4;"></div>
<svg style="left:36px;top:98px" width="17" height="14" viewBox="0 0 17 14"><path d="M0.5 0.5h12v9h-12z" fill="#fff" stroke="#8390a3"/><path d="M3 2.5h7M3 4.5h7M3 6.5h7" stroke="#98a2b3" stroke-width="1"/><path d="M8.4 8.4l2.3 2.4 4.2-4.4" fill="none" stroke="#1fbd2c" stroke-width="2.3"/></svg>
<span class="tx" style="top:96px;font-size:14px;transform:scaleX(0.8967);left:59px;transform-origin:0 0;color:#333;">0000-000044</span>
<span class="tx" style="top:96px;font-size:14px;transform:scaleX(0.9134);left:202px;transform-origin:0 0;color:#333;">28.01.2021</span>
<span class="tx" style="top:96px;font-size:14px;transform:scaleX(0.9175);left:374.00px;transform-origin:0 0;color:#333;">2,00</span>
<span class="tx" style="top:96px;font-size:14px;transform:scaleX(0.9139);left:416px;transform-origin:0 0;color:#333;">Интернет-решен...</span>
<span class="tx" style="top:96px;font-size:14px;transform:scaleX(0.8971);left:549px;transform-origin:0 0;color:#333;">63033624-0208</span>
<span class="tx" style="top:96px;font-size:14px;transform:scaleX(0.9263);left:707px;transform-origin:0 0;color:#333;">Комплектация</span>
<span class="tx" style="top:96px;font-size:14px;transform:scaleX(0.9175);left:895px;transform-origin:0 0;color:#333;">28.01.2021 15:04</span>
<span class="tx" style="top:96px;font-size:14px;transform:scaleX(0.9446);left:1084px;transform-origin:0 0;color:#333;">Ozon FBS</span>
<span class="tx" style="top:96px;font-size:14px;transform:scaleX(0.9328);left:1391px;transform-origin:0 0;color:#c61616;">В процессе</span>
<div style="left:0px;top:118px;width:1418px;height:28px;background:#ffffff;"></div>
<div style="left:0px;top:146px;width:1418px;height:1px;background:#e4e4e4;"></div>
<svg style="left:36px;top:127px" width="17" height="14" viewBox="0 0 17 14"><path d="M0.5 0.5h12v9h-12z" fill="#fff" stroke="#8390a3"/><path d="M3 2.5h7M3 4.5h7M3 6.5h7" stroke="#98a2b3" stroke-width="1"/><path d="M8.4 8.4l2.3 2.4 4.2-4.4" fill="none" stroke="#1fbd2c" stroke-width="2.3"/></svg>
<span class="tx" style="top:125px;font-size:14px;transform:scaleX(0.8967);left:59px;transform-origin:0 0;color:#333;">0000-000045</span>
<span class="tx" style="top:125px;font-size:14px;transform:scaleX(0.9134);left:202px;transform-origin:0 0;color:#333;">28.01.2021</span>
<span class="tx" style="top:125px;font-size:14px;transform:scaleX(0.9175);left:374.00px;transform-origin:0 0;color:#333;">2,00</span>
<span class="tx" style="top:125px;font-size:14px;transform:scaleX(0.9139);left:416px;transform-origin:0 0;color:#333;">Интернет-решен...</span>
<span class="tx" style="top:125px;font-size:14px;transform:scaleX(0.8971);left:549px;transform-origin:0 0;color:#333;">21011211-0211</span>
<span class="tx" style="top:125px;font-size:14px;transform:scaleX(0.9263);left:707px;transform-origin:0 0;color:#333;">Комплектация</span>
<span class="tx" style="top:125px;font-size:14px;transform:scaleX(0.9175);left:895px;transform-origin:0 0;color:#333;">28.01.2021 15:04</span>
<span class="tx" style="top:125px;font-size:14px;transform:scaleX(0.9446);left:1084px;transform-origin:0 0;color:#333;">Ozon FBS</span>
<span class="tx" style="top:125px;font-size:14px;transform:scaleX(0.9328);left:1391px;transform-origin:0 0;color:#c61616;">В процессе</span>
<div style="left:0px;top:147px;width:1418px;height:28px;background:#f9f9f9;"></div>
<div style="left:0px;top:175px;width:1418px;height:1px;background:#e4e4e4;"></div>
<svg style="left:36px;top:156px" width="17" height="14" viewBox="0 0 17 14"><path d="M0.5 0.5h12v9h-12z" fill="#fff" stroke="#8390a3"/><path d="M3 2.5h7M3 4.5h7M3 6.5h7" stroke="#98a2b3" stroke-width="1"/><path d="M8.4 8.4l2.3 2.4 4.2-4.4" fill="none" stroke="#1fbd2c" stroke-width="2.3"/></svg>
<span class="tx" style="top:154px;font-size:14px;transform:scaleX(0.8967);left:59px;transform-origin:0 0;color:#333;">0000-000046</span>
<span class="tx" style="top:154px;font-size:14px;transform:scaleX(0.9134);left:202px;transform-origin:0 0;color:#333;">28.01.2021</span>
<span class="tx" style="top:154px;font-size:14px;transform:scaleX(0.9175);left:374.00px;transform-origin:0 0;color:#333;">1,00</span>
<span class="tx" style="top:154px;font-size:14px;transform:scaleX(0.9139);left:416px;transform-origin:0 0;color:#333;">Интернет-решен...</span>
<span class="tx" style="top:154px;font-size:14px;transform:scaleX(0.8971);left:549px;transform-origin:0 0;color:#333;">42022450-0225</span>
<span class="tx" style="top:154px;font-size:14px;transform:scaleX(0.9263);left:707px;transform-origin:0 0;color:#333;">Комплектация</span>
<span class="tx" style="top:154px;font-size:14px;transform:scaleX(0.9175);left:895px;transform-origin:0 0;color:#333;">28.01.2021 15:05</span>
<span class="tx" style="top:154px;font-size:14px;transform:scaleX(0.9446);left:1084px;transform-origin:0 0;color:#333;">Ozon FBS</span>
<span class="tx" style="top:154px;font-size:14px;transform:scaleX(0.9328);left:1391px;transform-origin:0 0;color:#c61616;">В процессе</span>
<div style="left:0px;top:176px;width:1418px;height:28px;background:#ffffff;"></div>
<div style="left:0px;top:204px;width:1418px;height:1px;background:#e4e4e4;"></div>
<svg style="left:36px;top:185px" width="17" height="14" viewBox="0 0 17 14"><path d="M0.5 0.5h12v9h-12z" fill="#fff" stroke="#8390a3"/><path d="M3 2.5h7M3 4.5h7M3 6.5h7" stroke="#98a2b3" stroke-width="1"/><path d="M8.4 8.4l2.3 2.4 4.2-4.4" fill="none" stroke="#1fbd2c" stroke-width="2.3"/></svg>
<span class="tx" style="top:183px;font-size:14px;transform:scaleX(0.8967);left:59px;transform-origin:0 0;color:#333;">0000-000047</span>
<span class="tx" style="top:183px;font-size:14px;transform:scaleX(0.9134);left:202px;transform-origin:0 0;color:#333;">28.01.2021</span>
<span class="tx" style="top:183px;font-size:14px;transform:scaleX(0.9175);left:349.00px;transform-origin:0 0;color:#333;">9 200,00</span>
<span class="tx" style="top:183px;font-size:14px;transform:scaleX(0.9382);left:416px;transform-origin:0 0;color:#333;">Розничный покуп...</span>
<span class="tx" style="top:183px;font-size:14px;transform:scaleX(0.8990);left:549px;transform-origin:0 0;color:#333;">021010655</span>
<span class="tx" style="top:183px;font-size:14px;transform:scaleX(0.9257);left:707px;transform-origin:0 0;color:#333;">Скомплектован</span>
<span class="tx" style="top:183px;font-size:14px;transform:scaleX(0.9175);left:895px;transform-origin:0 0;color:#333;">28.01.2021 19:09</span>
<span class="tx" style="top:183px;font-size:14px;transform:scaleX(0.9176);left:1084px;transform-origin:0 0;color:#333;">goods</span>
<span class="tx" style="top:183px;font-size:14px;transform:scaleX(0.9328);left:1391px;transform-origin:0 0;color:#c61616;">В процессе</span>
<div style="left:0px;top:205px;width:1418px;height:28px;background:#f9f9f9;"></div>
<div style="left:0px;top:233px;width:1418px;height:1px;background:#e4e4e4;"></div>
<svg style="left:36px;top:214px" width="17" height="14" viewBox="0 0 17 14"><path d="M0.5 0.5h12v9h-12z" fill="#fff" stroke="#8390a3"/><path d="M3 2.5h7M3 4.5h7M3 6.5h7" stroke="#98a2b3" stroke-width="1"/><path d="M8.4 8.4l2.3 2.4 4.2-4.4" fill="none" stroke="#1fbd2c" stroke-width="2.3"/></svg>
<span class="tx" style="top:212px;font-size:14px;transform:scaleX(0.8967);left:59px;transform-origin:0 0;color:#333;">0000-000049</span>
<span class="tx" style="top:212px;font-size:14px;transform:scaleX(0.9134);left:202px;transform-origin:0 0;color:#333;">28.01.2021</span>
<span class="tx" style="top:212px;font-size:14px;transform:scaleX(0.9134);left:335.00px;transform-origin:0 0;color:#333;">108 000,00</span>
<span class="tx" style="top:212px;font-size:14px;transform:scaleX(0.9382);left:416px;transform-origin:0 0;color:#333;">Розничный покуп...</span>
<span class="tx" style="top:212px;font-size:14px;transform:scaleX(0.8990);left:549px;transform-origin:0 0;color:#333;">021010653</span>
<span class="tx" style="top:212px;font-size:14px;transform:scaleX(0.9263);left:707px;transform-origin:0 0;color:#333;">Комплектация</span>
<span class="tx" style="top:212px;font-size:14px;transform:scaleX(0.9175);left:895px;transform-origin:0 0;color:#333;">28.01.2021 19:15</span>
<span class="tx" style="top:212px;font-size:14px;transform:scaleX(0.9176);left:1084px;transform-origin:0 0;color:#333;">goods</span>
<span class="tx" style="top:212px;font-size:14px;transform:scaleX(0.9328);left:1391px;transform-origin:0 0;color:#c61616;">В процессе</span>
<div style="left:0px;top:234px;width:1418px;height:28px;background:#ffffff;"></div>
<div style="left:0px;top:262px;width:1418px;height:1px;background:#e4e4e4;"></div>
<svg style="left:36px;top:243px" width="17" height="14" viewBox="0 0 17 14"><path d="M0.5 0.5h12v9h-12z" fill="#fff" stroke="#8390a3"/><path d="M3 2.5h7M3 4.5h7M3 6.5h7" stroke="#98a2b3" stroke-width="1"/><path d="M8.4 8.4l2.3 2.4 4.2-4.4" fill="none" stroke="#1fbd2c" stroke-width="2.3"/></svg>
<span class="tx" style="top:241px;font-size:14px;transform:scaleX(0.8967);left:59px;transform-origin:0 0;color:#a6a6a6;">0000-000050</span>
<span class="tx" style="top:241px;font-size:14px;transform:scaleX(0.9134);left:202px;transform-origin:0 0;color:#a6a6a6;">03.02.2021</span>
<span class="tx" style="top:241px;font-size:14px;transform:scaleX(0.9383);left:416px;transform-origin:0 0;color:#a6a6a6;">Вайлдберриз, О...</span>
<span class="tx" style="top:241px;font-size:14px;transform:scaleX(0.8990);left:549px;transform-origin:0 0;color:#a6a6a6;">12748952</span>
<span class="tx" style="top:241px;font-size:14px;transform:scaleX(0.9144);left:707px;transform-origin:0 0;color:#a6a6a6;">Отменен</span>
<span class="tx" style="top:241px;font-size:14px;transform:scaleX(0.9175);left:895px;transform-origin:0 0;color:#a6a6a6;">03.02.2021 18:52</span>
<span class="tx" style="top:241px;font-size:14px;transform:scaleX(0.9430);left:1084px;transform-origin:0 0;color:#a6a6a6;">Wildberries FBS (с н...</span>
<span class="tx" style="top:241px;font-size:14px;transform:scaleX(0.9222);left:1391px;transform-origin:0 0;color:#a6a6a6;">Закрыт</span>
<div style="left:0px;top:263px;width:1418px;height:28px;background:#f9f9f9;"></div>
<div style="left:0px;top:291px;width:1418px;height:1px;background:#e4e4e4;"></div>
<svg style="left:36px;top:272px" width="17" height="14" viewBox="0 0 17 14"><path d="M0.5 0.5h12v9h-12z" fill="#fff" stroke="#8390a3"/><path d="M3 2.5h7M3 4.5h7M3 6.5h7" stroke="#98a2b3" stroke-width="1"/><path d="M8.4 8.4l2.3 2.4 4.2-4.4" fill="none" stroke="#1fbd2c" stroke-width="2.3"/></svg>
<span class="tx" style="top:270px;font-size:14px;transform:scaleX(0.8967);left:59px;transform-origin:0 0;color:#333;">0000-000052</span>
<span class="tx" style="top:270px;font-size:14px;transform:scaleX(0.9134);left:202px;transform-origin:0 0;color:#333;">03.02.2021</span>
<span class="tx" style="top:270px;font-size:14px;transform:scaleX(0.9108);left:360.00px;transform-origin:0 0;color:#333;">350,00</span>
<span class="tx" style="top:270px;font-size:14px;transform:scaleX(0.9383);left:416px;transform-origin:0 0;color:#333;">Вайлдберриз, О...</span>
<span class="tx" style="top:270px;font-size:14px;transform:scaleX(0.8990);left:549px;transform-origin:0 0;color:#333;">13207836</span>
<span class="tx" style="top:270px;font-size:14px;transform:scaleX(0.9343);left:707px;transform-origin:0 0;color:#333;">Отгружен</span>
<span class="tx" style="top:270px;font-size:14px;transform:scaleX(0.9175);left:895px;transform-origin:0 0;color:#333;">03.02.2021 18:52</span>
<span class="tx" style="top:270px;font-size:14px;transform:scaleX(0.9430);left:1084px;transform-origin:0 0;color:#333;">Wildberries FBS (с н...</span>
<span class="tx" style="top:270px;font-size:14px;transform:scaleX(0.9328);left:1391px;transform-origin:0 0;color:#c61616;">В процессе</span>
<div style="left:0px;top:292px;width:1418px;height:28px;background:#ffffff;"></div>
<div style="left:0px;top:320px;width:1418px;height:1px;background:#e4e4e4;"></div>
<svg style="left:36px;top:301px" width="17" height="14" viewBox="0 0 17 14"><path d="M0.5 0.5h12v9h-12z" fill="#fff" stroke="#8390a3"/><path d="M3 2.5h7M3 4.5h7M3 6.5h7" stroke="#98a2b3" stroke-width="1"/><path d="M8.4 8.4l2.3 2.4 4.2-4.4" fill="none" stroke="#1fbd2c" stroke-width="2.3"/></svg>
<span class="tx" style="top:299px;font-size:14px;transform:scaleX(0.8967);left:59px;transform-origin:0 0;color:#333;">0000-000053</span>
<span class="tx" style="top:299px;font-size:14px;transform:scaleX(0.9134);left:202px;transform-origin:0 0;color:#333;">03.02.2021</span>
<span class="tx" style="top:299px;font-size:14px;transform:scaleX(0.9108);left:360.00px;transform-origin:0 0;color:#333;">350,00</span>
<span class="tx" style="top:299px;font-size:14px;transform:scaleX(0.9383);left:416px;transform-origin:0 0;color:#333;">Вайлдберриз, О...</span>
<span class="tx" style="top:299px;font-size:14px;transform:scaleX(0.8990);left:549px;transform-origin:0 0;color:#333;">13207835</span>
<span class="tx" style="top:299px;font-size:14px;transform:scaleX(0.9257);left:707px;transform-origin:0 0;color:#333;">Скомплектован</span>
<span class="tx" style="top:299px;font-size:14px;transform:scaleX(0.9175);left:895px;transform-origin:0 0;color:#333;">03.02.2021 18:52</span>
<span class="tx" style="top:299px;font-size:14px;transform:scaleX(0.9430);left:1084px;transform-origin:0 0;color:#333;">Wildberries FBS (с н...</span>
<span class="tx" style="top:299px;font-size:14px;transform:scaleX(0.9328);left:1391px;transform-origin:0 0;color:#c61616;">В процессе</span>
<div style="left:0px;top:321px;width:1418px;height:28px;background:#ffeaee;"></div>
<div style="left:0px;top:349px;width:1418px;height:1px;background:#e4e4e4;"></div>
<svg style="left:36px;top:330px" width="17" height="14" viewBox="0 0 17 14"><path d="M0.5 0.5h12v9h-12z" fill="#fff" stroke="#8390a3"/><path d="M3 2.5h7M3 4.5h7M3 6.5h7" stroke="#98a2b3" stroke-width="1"/><path d="M8.4 8.4l2.3 2.4 4.2-4.4" fill="none" stroke="#1fbd2c" stroke-width="2.3"/></svg>
<span class="tx" style="top:328px;font-size:14px;transform:scaleX(0.8967);left:59px;transform-origin:0 0;color:#333;">0000-000054</span>
<span class="tx" style="top:328px;font-size:14px;transform:scaleX(0.9134);left:202px;transform-origin:0 0;color:#333;">03.02.2021</span>
<span class="tx" style="top:328px;font-size:14px;transform:scaleX(0.9108);left:360.00px;transform-origin:0 0;color:#333;">350,00</span>
<span class="tx" style="top:328px;font-size:14px;transform:scaleX(0.9383);left:416px;transform-origin:0 0;color:#333;">Вайлдберриз, О...</span>
<span class="tx" style="top:328px;font-size:14px;transform:scaleX(0.8990);left:549px;transform-origin:0 0;color:#333;">12766188</span>
<span class="tx" style="top:328px;font-size:14px;transform:scaleX(0.9175);left:895px;transform-origin:0 0;color:#333;">03.02.2021 18:52</span>
<span class="tx" style="top:328px;font-size:14px;transform:scaleX(0.9430);left:1084px;transform-origin:0 0;color:#333;">Wildberries FBS (с н...</span>
<span class="tx" style="top:328px;font-size:14px;transform:scaleX(0.9274);left:1391px;transform-origin:0 0;color:#c61616;">Ожидает</span>
<div style="left:0px;top:321px;width:1418px;height:1px;background:#fff;"></div>
<div style="left:0px;top:348px;width:1418px;height:1px;background:#fff;"></div>
<div style="left:26px;top:321px;width:1px;height:28px;background:#fff;"></div>
<div style="left:193px;top:321px;width:1px;height:28px;background:#fff;"></div>
<div style="left:300px;top:321px;width:1px;height:28px;background:#fff;"></div>
<div style="left:407px;top:321px;width:1px;height:28px;background:#fff;"></div>
<div style="left:540px;top:321px;width:1px;height:28px;background:#fff;"></div>
<div style="left:698px;top:321px;width:1px;height:28px;background:#fff;"></div>
<div style="left:886px;top:321px;width:1px;height:28px;background:#fff;"></div>
<div style="left:1075px;top:321px;width:1px;height:28px;background:#fff;"></div>
<div style="left:1228px;top:321px;width:1px;height:28px;background:#fff;"></div>
<div style="left:1382px;top:321px;width:1px;height:28px;background:#fff;"></div>
<div style="left:0px;top:350px;width:1418px;height:28px;background:#ffffff;"></div>
<div style="left:0px;top:378px;width:1418px;height:1px;background:#e4e4e4;"></div>
<svg style="left:36px;top:359px" width="17" height="14" viewBox="0 0 17 14"><path d="M0.5 0.5h12v9h-12z" fill="#fff" stroke="#8390a3"/><path d="M3 2.5h7M3 4.5h7M3 6.5h7" stroke="#98a2b3" stroke-width="1"/><path d="M8.4 8.4l2.3 2.4 4.2-4.4" fill="none" stroke="#1fbd2c" stroke-width="2.3"/></svg>
<span class="tx" style="top:357px;font-size:14px;transform:scaleX(0.8967);left:59px;transform-origin:0 0;color:#a6a6a6;">0000-000055</span>
<span class="tx" style="top:357px;font-size:14px;transform:scaleX(0.9134);left:202px;transform-origin:0 0;color:#a6a6a6;">03.02.2021</span>
<span class="tx" style="top:357px;font-size:14px;transform:scaleX(0.9383);left:416px;transform-origin:0 0;color:#a6a6a6;">Вайлдберриз, О...</span>
<span class="tx" style="top:357px;font-size:14px;transform:scaleX(0.8990);left:549px;transform-origin:0 0;color:#a6a6a6;">12748951</span>
<span class="tx" style="top:357px;font-size:14px;transform:scaleX(0.9144);left:707px;transform-origin:0 0;color:#a6a6a6;">Отменен</span>
<span class="tx" style="top:357px;font-size:14px;transform:scaleX(0.9175);left:895px;transform-origin:0 0;color:#a6a6a6;">03.02.2021 18:52</span>
<span class="tx" style="top:357px;font-size:14px;transform:scaleX(0.9430);left:1084px;transform-origin:0 0;color:#a6a6a6;">Wildberries FBS (с н...</span>
<span class="tx" style="top:357px;font-size:14px;transform:scaleX(0.9222);left:1391px;transform-origin:0 0;color:#a6a6a6;">Закрыт</span>
<div style="left:0px;top:379px;width:1418px;height:28px;background:#ffbfcb;"></div>
<div style="left:0px;top:407px;width:1418px;height:1px;background:#e4e4e4;"></div>
<svg style="left:36px;top:388px" width="17" height="14" viewBox="0 0 17 14"><path d="M0.5 0.5h12v9h-12z" fill="#fff" stroke="#8390a3"/><path d="M3 2.5h7M3 4.5h7M3 6.5h7" stroke="#98a2b3" stroke-width="1"/><path d="M8.4 8.4l2.3 2.4 4.2-4.4" fill="none" stroke="#1fbd2c" stroke-width="2.3"/></svg>
<span class="tx" style="top:386px;font-size:14px;transform:scaleX(0.8967);left:59px;transform-origin:0 0;color:#333;">0000-000059</span>
<span class="tx" style="top:386px;font-size:14px;transform:scaleX(0.9134);left:202px;transform-origin:0 0;color:#333;">03.02.2021</span>
<span class="tx" style="top:386px;font-size:14px;transform:scaleX(0.9175);left:374.00px;transform-origin:0 0;color:#333;">4,00</span>
<span class="tx" style="top:386px;font-size:14px;transform:scaleX(0.9139);left:416px;transform-origin:0 0;color:#333;">Интернет-решен...</span>
<span class="tx" style="top:386px;font-size:14px;transform:scaleX(0.8971);left:549px;transform-origin:0 0;color:#333;">21020541-0541</span>
<span class="tx" style="top:386px;font-size:14px;transform:scaleX(0.9222);left:707px;transform-origin:0 0;color:#333;">Подтверждение</span>
<span class="tx" style="top:386px;font-size:14px;transform:scaleX(0.9175);left:895px;transform-origin:0 0;color:#333;">03.02.2021 20:49</span>
<span class="tx" style="top:386px;font-size:14px;transform:scaleX(0.9446);left:1084px;transform-origin:0 0;color:#333;">Ozon FBS</span>
<span class="tx" style="top:386px;font-size:14px;transform:scaleX(0.9274);left:1391px;transform-origin:0 0;color:#c61616;">Ожидает</span>
<div style="left:0px;top:408px;width:1418px;height:28px;background:#ffbfcb;"></div>
<div style="left:0px;top:436px;width:1418px;height:1px;background:#e4e4e4;"></div>
<svg style="left:36px;top:417px" width="17" height="14" viewBox="0 0 17 14"><path d="M0.5 0.5h12v9h-12z" fill="#fff" stroke="#8390a3"/><path d="M3 2.5h7M3 4.5h7M3 6.5h7" stroke="#98a2b3" stroke-width="1"/><path d="M8.4 8.4l2.3 2.4 4.2-4.4" fill="none" stroke="#1fbd2c" stroke-width="2.3"/></svg>
<span class="tx" style="top:415px;font-size:14px;transform:scaleX(0.8967);left:59px;transform-origin:0 0;color:#333;">0000-000058</span>
<span class="tx" style="top:415px;font-size:14px;transform:scaleX(0.9134);left:202px;transform-origin:0 0;color:#333;">03.02.2021</span>
<span class="tx" style="top:415px;font-size:14px;transform:scaleX(0.9175);left:374.00px;transform-origin:0 0;color:#333;">4,00</span>
<span class="tx" style="top:415px;font-size:14px;transform:scaleX(0.9139);left:416px;transform-origin:0 0;color:#333;">Интернет-решен...</span>
<span class="tx" style="top:415px;font-size:14px;transform:scaleX(0.8971);left:549px;transform-origin:0 0;color:#333;">21020533-0533</span>
<span class="tx" style="top:415px;font-size:14px;transform:scaleX(0.9222);left:707px;transform-origin:0 0;color:#333;">Подтверждение</span>
<span class="tx" style="top:415px;font-size:14px;transform:scaleX(0.9175);left:895px;transform-origin:0 0;color:#333;">03.02.2021 20:49</span>
<span class="tx" style="top:415px;font-size:14px;transform:scaleX(0.9446);left:1084px;transform-origin:0 0;color:#333;">Ozon FBS</span>
<span class="tx" style="top:415px;font-size:14px;transform:scaleX(0.9274);left:1391px;transform-origin:0 0;color:#c61616;">Ожидает</span>
<div style="left:0px;top:437px;width:1418px;height:28px;background:#ffbfcb;"></div>
<div style="left:0px;top:465px;width:1418px;height:1px;background:#e4e4e4;"></div>
<svg style="left:36px;top:446px" width="17" height="14" viewBox="0 0 17 14"><path d="M0.5 0.5h12v9h-12z" fill="#fff" stroke="#8390a3"/><path d="M3 2.5h7M3 4.5h7M3 6.5h7" stroke="#98a2b3" stroke-width="1"/><path d="M8.4 8.4l2.3 2.4 4.2-4.4" fill="none" stroke="#1fbd2c" stroke-width="2.3"/></svg>
<span class="tx" style="top:444px;font-size:14px;transform:scaleX(0.8967);left:59px;transform-origin:0 0;color:#333;">0000-000057</span>
<span class="tx" style="top:444px;font-size:14px;transform:scaleX(0.9134);left:202px;transform-origin:0 0;color:#333;">03.02.2021</span>
<span class="tx" style="top:444px;font-size:14px;transform:scaleX(0.9175);left:374.00px;transform-origin:0 0;color:#333;">4,00</span>
<span class="tx" style="top:444px;font-size:14px;transform:scaleX(0.9139);left:416px;transform-origin:0 0;color:#333;">Интернет-решен...</span>
<span class="tx" style="top:444px;font-size:14px;transform:scaleX(0.8971);left:549px;transform-origin:0 0;color:#333;">21020502-0502</span>
<span class="tx" style="top:444px;font-size:14px;transform:scaleX(0.9222);left:707px;transform-origin:0 0;color:#333;">Подтверждение</span>
<span class="tx" style="top:444px;font-size:14px;transform:scaleX(0.9175);left:895px;transform-origin:0 0;color:#333;">03.02.2021 20:50</span>
<span class="tx" style="top:444px;font-size:14px;transform:scaleX(0.9446);left:1084px;transform-origin:0 0;color:#333;">Ozon FBS</span>
<span class="tx" style="top:444px;font-size:14px;transform:scaleX(0.9274);left:1391px;transform-origin:0 0;color:#c61616;">Ожидает</span>
<div style="left:0px;top:466px;width:1418px;height:28px;background:#ffbfcb;"></div>
<div style="left:0px;top:494px;width:1418px;height:1px;background:#e4e4e4;"></div>
<svg style="left:36px;top:475px" width="17" height="14" viewBox="0 0 17 14"><path d="M0.5 0.5h12v9h-12z" fill="#fff" stroke="#8390a3"/><path d="M3 2.5h7M3 4.5h7M3 6.5h7" stroke="#98a2b3" stroke-width="1"/><path d="M8.4 8.4l2.3 2.4 4.2-4.4" fill="none" stroke="#1fbd2c" stroke-width="2.3"/></svg>
<span class="tx" style="top:473px;font-size:14px;transform:scaleX(0.8967);left:59px;transform-origin:0 0;color:#333;">0000-000056</span>
<span class="tx" style="top:473px;font-size:14px;transform:scaleX(0.9134);left:202px;transform-origin:0 0;color:#333;">03.02.2021</span>
<span class="tx" style="top:473px;font-size:14px;transform:scaleX(0.9175);left:374.00px;transform-origin:0 0;color:#333;">4,00</span>
<span class="tx" style="top:473px;font-size:14px;transform:scaleX(0.9139);left:416px;transform-origin:0 0;color:#333;">Интернет-решен...</span>
<span class="tx" style="top:473px;font-size:14px;transform:scaleX(0.8971);left:549px;transform-origin:0 0;color:#333;">63061524-0508</span>
<span class="tx" style="top:473px;font-size:14px;transform:scaleX(0.9222);left:707px;transform-origin:0 0;color:#333;">Подтверждение</span>
<span class="tx" style="top:473px;font-size:14px;transform:scaleX(0.9175);left:895px;transform-origin:0 0;color:#333;">03.02.2021 20:50</span>
<span class="tx" style="top:473px;font-size:14px;transform:scaleX(0.9446);left:1084px;transform-origin:0 0;color:#333;">Ozon FBS</span>
<span class="tx" style="top:473px;font-size:14px;transform:scaleX(0.9274);left:1391px;transform-origin:0 0;color:#c61616;">Ожидает</span>
<div style="left:0px;top:495px;width:1418px;height:28px;background:#ffbfcb;"></div>
<div style="left:0px;top:523px;width:1418px;height:1px;background:#e4e4e4;"></div>
<svg style="left:36px;top:504px" width="17" height="14" viewBox="0 0 17 14"><path d="M0.5 0.5h12v9h-12z" fill="#fff" stroke="#8390a3"/><path d="M3 2.5h7M3 4.5h7M3 6.5h7" stroke="#98a2b3" stroke-width="1"/><path d="M8.4 8.4l2.3 2.4 4.2-4.4" fill="none" stroke="#1fbd2c" stroke-width="2.3"/></svg>
<span class="tx" style="top:502px;font-size:14px;transform:scaleX(0.8967);left:59px;transform-origin:0 0;color:#333;">0000-000060</span>
<span class="tx" style="top:502px;font-size:14px;transform:scaleX(0.9134);left:202px;transform-origin:0 0;color:#333;">03.02.2021</span>
<span class="tx" style="top:502px;font-size:14px;transform:scaleX(0.9175);left:374.00px;transform-origin:0 0;color:#333;">4,00</span>
<span class="tx" style="top:502px;font-size:14px;transform:scaleX(0.9139);left:416px;transform-origin:0 0;color:#333;">Интернет-решен...</span>
<span class="tx" style="top:502px;font-size:14px;transform:scaleX(0.8971);left:549px;transform-origin:0 0;color:#333;">21020500-0500</span>
<span class="tx" style="top:502px;font-size:14px;transform:scaleX(0.9222);left:707px;transform-origin:0 0;color:#333;">Подтверждение</span>
<span class="tx" style="top:502px;font-size:14px;transform:scaleX(0.9175);left:895px;transform-origin:0 0;color:#333;">03.02.2021 20:53</span>
<span class="tx" style="top:502px;font-size:14px;transform:scaleX(0.9446);left:1084px;transform-origin:0 0;color:#333;">Ozon FBS</span>
<span class="tx" style="top:502px;font-size:14px;transform:scaleX(0.9274);left:1391px;transform-origin:0 0;color:#c61616;">Ожидает</span>
<div style="left:0px;top:524px;width:1418px;height:28px;background:#ffffff;"></div>
<div style="left:0px;top:552px;width:1418px;height:1px;background:#e4e4e4;"></div>
<svg style="left:36px;top:533px" width="17" height="14" viewBox="0 0 17 14"><path d="M0.5 0.5h12v9h-12z" fill="#fff" stroke="#8390a3"/><path d="M3 2.5h7M3 4.5h7M3 6.5h7" stroke="#98a2b3" stroke-width="1"/><path d="M8.4 8.4l2.3 2.4 4.2-4.4" fill="none" stroke="#1fbd2c" stroke-width="2.3"/></svg>
<span class="tx" style="top:531px;font-size:14px;transform:scaleX(0.8967);left:59px;transform-origin:0 0;color:#333;">0000-000061</span>
<span class="tx" style="top:531px;font-size:14px;transform:scaleX(0.9134);left:202px;transform-origin:0 0;color:#333;">03.02.2021</span>
<span class="tx" style="top:531px;font-size:14px;transform:scaleX(0.9175);left:374.00px;transform-origin:0 0;color:#333;">4,00</span>
<span class="tx" style="top:531px;font-size:14px;transform:scaleX(0.9139);left:416px;transform-origin:0 0;color:#333;">Интернет-решен...</span>
<span class="tx" style="top:531px;font-size:14px;transform:scaleX(0.8971);left:549px;transform-origin:0 0;color:#333;">42041010-0505</span>
<span class="tx" style="top:531px;font-size:14px;transform:scaleX(0.9263);left:707px;transform-origin:0 0;color:#333;">Комплектация</span>
<span class="tx" style="top:531px;font-size:14px;transform:scaleX(0.9175);left:895px;transform-origin:0 0;color:#333;">03.02.2021 20:53</span>
<span class="tx" style="top:531px;font-size:14px;transform:scaleX(0.9446);left:1084px;transform-origin:0 0;color:#333;">Ozon FBS</span>
<span class="tx" style="top:531px;font-size:14px;transform:scaleX(0.9328);left:1391px;transform-origin:0 0;color:#c61616;">В процессе</span>
<div style="left:0px;top:553px;width:1418px;height:28px;background:#f9f9f9;"></div>
<div style="left:0px;top:581px;width:1418px;height:1px;background:#e4e4e4;"></div>
<svg style="left:36px;top:562px" width="17" height="14" viewBox="0 0 17 14"><path d="M0.5 0.5h12v9h-12z" fill="#fff" stroke="#8390a3"/><path d="M3 2.5h7M3 4.5h7M3 6.5h7" stroke="#98a2b3" stroke-width="1"/><path d="M8.4 8.4l2.3 2.4 4.2-4.4" fill="none" stroke="#1fbd2c" stroke-width="2.3"/></svg>
<span class="tx" style="top:560px;font-size:14px;transform:scaleX(0.8967);left:59px;transform-origin:0 0;color:#333;">0000-000062</span>
<span class="tx" style="top:560px;font-size:14px;transform:scaleX(0.9134);left:202px;transform-origin:0 0;color:#333;">03.02.2021</span>
<span class="tx" style="top:560px;font-size:14px;transform:scaleX(0.9175);left:374.00px;transform-origin:0 0;color:#333;">4,00</span>
<span class="tx" style="top:560px;font-size:14px;transform:scaleX(0.9139);left:416px;transform-origin:0 0;color:#333;">Интернет-решен...</span>
<span class="tx" style="top:560px;font-size:14px;transform:scaleX(0.8971);left:549px;transform-origin:0 0;color:#333;">21020511-0511</span>
<span class="tx" style="top:560px;font-size:14px;transform:scaleX(0.9263);left:707px;transform-origin:0 0;color:#333;">Комплектация</span>
<span class="tx" style="top:560px;font-size:14px;transform:scaleX(0.9175);left:895px;transform-origin:0 0;color:#333;">03.02.2021 20:53</span>
<span class="tx" style="top:560px;font-size:14px;transform:scaleX(0.9446);left:1084px;transform-origin:0 0;color:#333;">Ozon FBS</span>
<span class="tx" style="top:560px;font-size:14px;transform:scaleX(0.9328);left:1391px;transform-origin:0 0;color:#c61616;">В процессе</span>
<div style="left:0px;top:582px;width:1418px;height:28px;background:#ffffff;"></div>
<div style="left:0px;top:610px;width:1418px;height:1px;background:#e4e4e4;"></div>
<svg style="left:36px;top:591px" width="17" height="14" viewBox="0 0 17 14"><path d="M0.5 0.5h12v9h-12z" fill="#fff" stroke="#8390a3"/><path d="M3 2.5h7M3 4.5h7M3 6.5h7" stroke="#98a2b3" stroke-width="1"/><path d="M8.4 8.4l2.3 2.4 4.2-4.4" fill="none" stroke="#1fbd2c" stroke-width="2.3"/></svg>
<span class="tx" style="top:589px;font-size:14px;transform:scaleX(0.8967);left:59px;transform-origin:0 0;color:#333;">0000-000063</span>
<span class="tx" style="top:589px;font-size:14px;transform:scaleX(0.9134);left:202px;transform-origin:0 0;color:#333;">03.02.2021</span>
<span class="tx" style="top:589px;font-size:14px;transform:scaleX(0.9175);left:374.00px;transform-origin:0 0;color:#333;">4,00</span>
<span class="tx" style="top:589px;font-size:14px;transform:scaleX(0.9139);left:416px;transform-origin:0 0;color:#333;">Интернет-решен...</span>
<span class="tx" style="top:589px;font-size:14px;transform:scaleX(0.8971);left:549px;transform-origin:0 0;color:#333;">21020514-0514</span>
<span class="tx" style="top:589px;font-size:14px;transform:scaleX(0.9263);left:707px;transform-origin:0 0;color:#333;">Комплектация</span>
<span class="tx" style="top:589px;font-size:14px;transform:scaleX(0.9175);left:895px;transform-origin:0 0;color:#333;">03.02.2021 20:53</span>
<span class="tx" style="top:589px;font-size:14px;transform:scaleX(0.9446);left:1084px;transform-origin:0 0;color:#333;">Ozon FBS</span>
<span class="tx" style="top:589px;font-size:14px;transform:scaleX(0.9328);left:1391px;transform-origin:0 0;color:#c61616;">В процессе</span>
<div style="left:0px;top:611px;width:1418px;height:28px;background:#f9f9f9;"></div>
<div style="left:0px;top:639px;width:1418px;height:1px;background:#e4e4e4;"></div>
<svg style="left:36px;top:620px" width="17" height="14" viewBox="0 0 17 14"><path d="M0.5 0.5h12v9h-12z" fill="#fff" stroke="#8390a3"/><path d="M3 2.5h7M3 4.5h7M3 6.5h7" stroke="#98a2b3" stroke-width="1"/><path d="M8.4 8.4l2.3 2.4 4.2-4.4" fill="none" stroke="#1fbd2c" stroke-width="2.3"/></svg>
<span class="tx" style="top:618px;font-size:14px;transform:scaleX(0.8967);left:59px;transform-origin:0 0;color:#333;">0000-000064</span>
<span class="tx" style="top:618px;font-size:14px;transform:scaleX(0.9134);left:202px;transform-origin:0 0;color:#333;">03.02.2021</span>
<span class="tx" style="top:618px;font-size:14px;transform:scaleX(0.9175);left:374.00px;transform-origin:0 0;color:#333;">4,00</span>
<span class="tx" style="top:618px;font-size:14px;transform:scaleX(0.9139);left:416px;transform-origin:0 0;color:#333;">Интернет-решен...</span>
<span class="tx" style="top:618px;font-size:14px;transform:scaleX(0.8971);left:549px;transform-origin:0 0;color:#333;">42041034-0517</span>
<span class="tx" style="top:618px;font-size:14px;transform:scaleX(0.9263);left:707px;transform-origin:0 0;color:#333;">Комплектация</span>
<span class="tx" style="top:618px;font-size:14px;transform:scaleX(0.9175);left:895px;transform-origin:0 0;color:#333;">03.02.2021 20:53</span>
<span class="tx" style="top:618px;font-size:14px;transform:scaleX(0.9446);left:1084px;transform-origin:0 0;color:#333;">Ozon FBS</span>
<span class="tx" style="top:618px;font-size:14px;transform:scaleX(0.9328);left:1391px;transform-origin:0 0;color:#c61616;">В процессе</span>
<div style="left:0px;top:640px;width:1418px;height:28px;background:#ffffff;"></div>
<div style="left:0px;top:668px;width:1418px;height:1px;background:#e4e4e4;"></div>
<svg style="left:36px;top:649px" width="17" height="14" viewBox="0 0 17 14"><path d="M0.5 0.5h12v9h-12z" fill="#fff" stroke="#8390a3"/><path d="M3 2.5h7M3 4.5h7M3 6.5h7" stroke="#98a2b3" stroke-width="1"/><path d="M8.4 8.4l2.3 2.4 4.2-4.4" fill="none" stroke="#1fbd2c" stroke-width="2.3"/></svg>
<span class="tx" style="top:647px;font-size:14px;transform:scaleX(0.8967);left:59px;transform-origin:0 0;color:#333;">0000-000065</span>
<span class="tx" style="top:647px;font-size:14px;transform:scaleX(0.9134);left:202px;transform-origin:0 0;color:#333;">08.02.2021</span>
<span class="tx" style="top:647px;font-size:14px;transform:scaleX(0.9175);left:374.00px;transform-origin:0 0;color:#333;">1,00</span>
<span class="tx" style="top:647px;font-size:14px;transform:scaleX(0.9139);left:416px;transform-origin:0 0;color:#333;">Интернет-решен...</span>
<span class="tx" style="top:647px;font-size:14px;transform:scaleX(0.8971);left:549px;transform-origin:0 0;color:#333;">42042310-0155</span>
<span class="tx" style="top:647px;font-size:14px;transform:scaleX(0.9263);left:707px;transform-origin:0 0;color:#333;">Комплектация</span>
<span class="tx" style="top:647px;font-size:14px;transform:scaleX(0.9175);left:895px;transform-origin:0 0;color:#333;">08.02.2021 14:14</span>
<span class="tx" style="top:647px;font-size:14px;transform:scaleX(0.9446);left:1084px;transform-origin:0 0;color:#333;">Ozon FBS</span>
<span class="tx" style="top:647px;font-size:14px;transform:scaleX(0.9328);left:1391px;transform-origin:0 0;color:#c61616;">В процессе</span>
<div style="left:0px;top:669px;width:1418px;height:28px;background:#f9f9f9;"></div>
<div style="left:0px;top:697px;width:1418px;height:1px;background:#e4e4e4;"></div>
<svg style="left:36px;top:678px" width="17" height="14" viewBox="0 0 17 14"><path d="M0.5 0.5h12v9h-12z" fill="#fff" stroke="#8390a3"/><path d="M3 2.5h7M3 4.5h7M3 6.5h7" stroke="#98a2b3" stroke-width="1"/><path d="M8.4 8.4l2.3 2.4 4.2-4.4" fill="none" stroke="#1fbd2c" stroke-width="2.3"/></svg>
<span class="tx" style="top:676px;font-size:14px;transform:scaleX(0.8967);left:59px;transform-origin:0 0;color:#333;">0000-000066</span>
<span class="tx" style="top:676px;font-size:14px;transform:scaleX(0.9134);left:202px;transform-origin:0 0;color:#333;">08.02.2021</span>
<span class="tx" style="top:676px;font-size:14px;transform:scaleX(0.9175);left:374.00px;transform-origin:0 0;color:#333;">1,00</span>
<span class="tx" style="top:676px;font-size:14px;transform:scaleX(0.9139);left:416px;transform-origin:0 0;color:#333;">Интернет-решен...</span>
<span class="tx" style="top:676px;font-size:14px;transform:scaleX(0.8971);left:549px;transform-origin:0 0;color:#333;">42042250-0125</span>
<span class="tx" style="top:676px;font-size:14px;transform:scaleX(0.9263);left:707px;transform-origin:0 0;color:#333;">Комплектация</span>
<span class="tx" style="top:676px;font-size:14px;transform:scaleX(0.9175);left:895px;transform-origin:0 0;color:#333;">08.02.2021 14:15</span>
<span class="tx" style="top:676px;font-size:14px;transform:scaleX(0.9446);left:1084px;transform-origin:0 0;color:#333;">Ozon FBS</span>
<span class="tx" style="top:676px;font-size:14px;transform:scaleX(0.9328);left:1391px;transform-origin:0 0;color:#c61616;">В процессе</span>
<div style="left:0px;top:698px;width:1418px;height:28px;background:#ffffff;"></div>
<div style="left:0px;top:726px;width:1418px;height:1px;background:#e4e4e4;"></div>
<svg style="left:36px;top:707px" width="17" height="14" viewBox="0 0 17 14"><path d="M0.5 0.5h12v9h-12z" fill="#fff" stroke="#8390a3"/><path d="M3 2.5h7M3 4.5h7M3 6.5h7" stroke="#98a2b3" stroke-width="1"/><path d="M8.4 8.4l2.3 2.4 4.2-4.4" fill="none" stroke="#1fbd2c" stroke-width="2.3"/></svg>
<span class="tx" style="top:705px;font-size:14px;transform:scaleX(0.8967);left:59px;transform-origin:0 0;color:#333;">0000-000067</span>
<span class="tx" style="top:705px;font-size:14px;transform:scaleX(0.9134);left:202px;transform-origin:0 0;color:#333;">08.02.2021</span>
<span class="tx" style="top:705px;font-size:14px;transform:scaleX(0.9175);left:374.00px;transform-origin:0 0;color:#333;">1,00</span>
<span class="tx" style="top:705px;font-size:14px;transform:scaleX(0.9139);left:416px;transform-origin:0 0;color:#333;">Интернет-решен...</span>
<span class="tx" style="top:705px;font-size:14px;transform:scaleX(0.8971);left:549px;transform-origin:0 0;color:#333;">63063384-0128</span>
<span class="tx" style="top:705px;font-size:14px;transform:scaleX(0.9263);left:707px;transform-origin:0 0;color:#333;">Комплектация</span>
<span class="tx" style="top:705px;font-size:14px;transform:scaleX(0.9175);left:895px;transform-origin:0 0;color:#333;">08.02.2021 14:15</span>
<span class="tx" style="top:705px;font-size:14px;transform:scaleX(0.9446);left:1084px;transform-origin:0 0;color:#333;">Ozon FBS</span>
<span class="tx" style="top:705px;font-size:14px;transform:scaleX(0.9328);left:1391px;transform-origin:0 0;color:#c61616;">В процессе</span>
<div style="left:0px;top:727px;width:1418px;height:28px;background:#f9f9f9;"></div>
<div style="left:0px;top:755px;width:1418px;height:1px;background:#e4e4e4;"></div>
<svg style="left:36px;top:736px" width="17" height="14" viewBox="0 0 17 14"><path d="M0.5 0.5h12v9h-12z" fill="#fff" stroke="#8390a3"/><path d="M3 2.5h7M3 4.5h7M3 6.5h7" stroke="#98a2b3" stroke-width="1"/><path d="M8.4 8.4l2.3 2.4 4.2-4.4" fill="none" stroke="#1fbd2c" stroke-width="2.3"/></svg>
<span class="tx" style="top:734px;font-size:14px;transform:scaleX(0.8967);left:59px;transform-origin:0 0;color:#333;">0000-000068</span>
<span class="tx" style="top:734px;font-size:14px;transform:scaleX(0.9134);left:202px;transform-origin:0 0;color:#333;">08.02.2021</span>
<span class="tx" style="top:734px;font-size:14px;transform:scaleX(0.9175);left:374.00px;transform-origin:0 0;color:#333;">1,00</span>
<span class="tx" style="top:734px;font-size:14px;transform:scaleX(0.9139);left:416px;transform-origin:0 0;color:#333;">Интернет-решен...</span>
<span class="tx" style="top:734px;font-size:14px;transform:scaleX(0.8971);left:549px;transform-origin:0 0;color:#333;">21021131-0131</span>
<span class="tx" style="top:734px;font-size:14px;transform:scaleX(0.9263);left:707px;transform-origin:0 0;color:#333;">Комплектация</span>
<span class="tx" style="top:734px;font-size:14px;transform:scaleX(0.9175);left:895px;transform-origin:0 0;color:#333;">08.02.2021 14:15</span>
<span class="tx" style="top:734px;font-size:14px;transform:scaleX(0.9446);left:1084px;transform-origin:0 0;color:#333;">Ozon FBS</span>
<span class="tx" style="top:734px;font-size:14px;transform:scaleX(0.9328);left:1391px;transform-origin:0 0;color:#c61616;">В процессе</span>
</div>
<div style="left:941px;top:517px;width:188px;height:26px;border:2px solid #a98189;background:#ffdde3"></div>
<span class="tx" style="top:523px;font-size:14px;transform:scaleX(0.9222);left:949px;transform-origin:0 0;color:#333;">Подтверждение</span>
<div style="left:265px;top:952px;width:1257px;height:8px;border-radius:4px;background:#d3d3d3"></div>
<div style="left:265px;top:952px;width:697px;height:8px;border-radius:4px;background:#999"></div>
<svg style="left:251px;top:953px" width="5" height="7" viewBox="0 0 5 7"><path d="M5 0L0 3.5 5 7z" fill="#c4c4c4"/></svg>
<svg style="left:1532px;top:953px" width="5" height="7" viewBox="0 0 5 7"><path d="M0 0L5 3.5 0 7z" fill="#444"/></svg>
<div style="left:1564px;top:946px;width:97px;height:21px;border-top:1px solid #a3a3a3;border-left:1px solid #a3a3a3;background:linear-gradient(#fff,#f3f3f3)"></div>
<div style="left:1588px;top:947px;width:1px;height:20px;background:#b5b5b5;"></div>
<div style="left:1612px;top:947px;width:1px;height:20px;background:#b5b5b5;"></div>
<div style="left:1636px;top:947px;width:1px;height:20px;background:#b5b5b5;"></div>
<svg style="left:1572px;top:954px" width="10" height="7" viewBox="0 0 10 7"><path d="M0 0.5h10" stroke="#333" stroke-width="1.2"/><path d="M5 1.5L10 6.5H0z" fill="#333"/></svg>
<svg style="left:1596px;top:955px" width="10" height="6" viewBox="0 0 10 6"><path d="M5 0.5L10 5.5H0z" fill="#333"/></svg>
<svg style="left:1620px;top:955px" width="10" height="6" viewBox="0 0 10 6"><path d="M5 5.5L10 0.5H0z" fill="#333"/></svg>
<svg style="left:1644px;top:954px" width="10" height="7" viewBox="0 0 10 7"><path d="M0 6.5h10" stroke="#333" stroke-width="1.2"/><path d="M5 5.5L10 0.5H0z" fill="#333"/></svg>
<div style="left:926px;top:505px;width:152px;height:47px;border:4px solid #f5383b"></div>
</body></html>
